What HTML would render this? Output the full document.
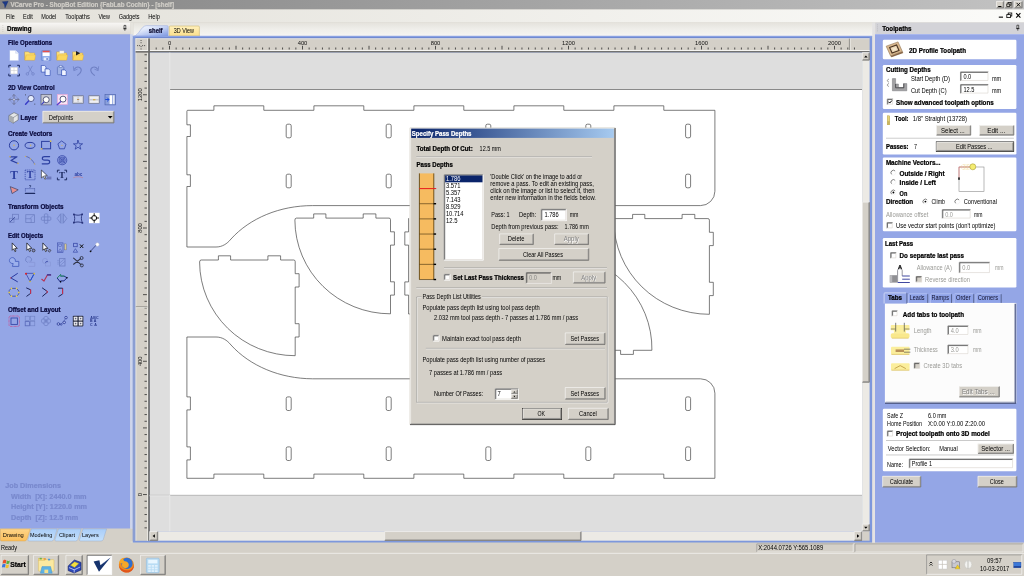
<!DOCTYPE html>
<html lang="en">
<head>
<meta charset="utf-8">
<title>VCarve Pro - ShopBot Edition {FabLab Cochin} - [shelf]</title>
<style>
html,body{margin:0;padding:0;background:#d4d0c8;overflow:hidden}
body{width:1024px;height:576px}
svg{display:block;font-family:"Liberation Sans",sans-serif;will-change:transform;transform:translateZ(0);-webkit-font-smoothing:antialiased}
text{white-space:pre}
</style>
</head>
<body>
<svg width="1024" height="576" viewBox="0 0 1024 576">
<defs>
<linearGradient id="gTitle" x1="0" x2="1" y1="0" y2="0"><stop offset="0" stop-color="#848484"/><stop offset="1" stop-color="#c2c2c2"/></linearGradient>
<linearGradient id="gMenu" x1="0" x2="1" y1="0" y2="0"><stop offset="0" stop-color="#e3e1da"/><stop offset="1" stop-color="#fbfbf9"/></linearGradient>
<linearGradient id="gHdrL" x1="0" x2="0" y1="0" y2="1"><stop offset="0" stop-color="#f8f7f5"/><stop offset="1" stop-color="#dcd9d2"/></linearGradient>
<linearGradient id="gDlg" x1="0" x2="1" y1="0" y2="0"><stop offset="0" stop-color="#0a246a"/><stop offset="1" stop-color="#a6caf0"/></linearGradient>
<linearGradient id="gShelf" x1="0" x2="1" y1="0" y2="1"><stop offset="0" stop-color="#ffffff"/><stop offset="0.35" stop-color="#dfe7fa"/><stop offset="1" stop-color="#7c98e2"/></linearGradient>
<linearGradient id="g3d" x1="0" x2="0" y1="0" y2="1"><stop offset="0" stop-color="#fff0bc"/><stop offset="1" stop-color="#fbdf8a"/></linearGradient>
<linearGradient id="gTabO" x1="0" x2="0" y1="0" y2="1"><stop offset="0" stop-color="#fdd488"/><stop offset="1" stop-color="#fbbf5c"/></linearGradient>
<linearGradient id="gTabB" x1="0" x2="0" y1="0" y2="1"><stop offset="0" stop-color="#a9cdf8"/><stop offset="1" stop-color="#c4e0fc"/></linearGradient>
<linearGradient id="gFold" x1="0" x2="0" y1="0" y2="1"><stop offset="0" stop-color="#fde98a"/><stop offset="1" stop-color="#f2b935"/></linearGradient>
<pattern id="pTrack" width="1.1" height="1.1" patternUnits="userSpaceOnUse"><rect width="1.1" height="1.1" fill="#ebe9e4"/></pattern>
<linearGradient id="gStrip" x1="0" x2="0" y1="0" y2="1"><stop offset="0" stop-color="#e4e2dc"/><stop offset="0.5" stop-color="#efeeea"/><stop offset="1" stop-color="#f5f4f1"/></linearGradient>
</defs>

<rect x="0.00" y="0.00" width="1024.00" height="576.00" fill="#d4d0c8" />
<rect x="0.00" y="0.00" width="1024.00" height="9.50" fill="url(#gTitle)" />
<path d="M2.2 1.8L8.2 1.2L5.0 7.9L4.4 4.4Z" fill="#1c3a86" stroke="#142a66" stroke-width="0.3" />
<text x="10.40" y="7.25" font-size="6.4" fill="#d0cdc7" font-weight="bold" stroke="#d0cdc7" stroke-width="0.22" textLength="163.60" lengthAdjust="spacingAndGlyphs" >VCarve Pro - ShopBot Edition {FabLab Cochin} - [shelf]</text>
<rect x="996.30" y="1.10" width="7.60" height="7.00" fill="#d4d0c8" />
<path d="M996.57 7.82V1.38H1003.62" fill="none" stroke="#ffffff" stroke-width="0.55" />
<path d="M996.57 7.82H1003.62V1.38" fill="none" stroke="#404040" stroke-width="0.55" />
<path d="M997.12 7.27H1003.07V1.93" fill="none" stroke="#808080" stroke-width="0.55" />
<rect x="1004.80" y="1.10" width="7.60" height="7.00" fill="#d4d0c8" />
<path d="M1005.07 7.82V1.38H1012.12" fill="none" stroke="#ffffff" stroke-width="0.55" />
<path d="M1005.07 7.82H1012.12V1.38" fill="none" stroke="#404040" stroke-width="0.55" />
<path d="M1005.62 7.27H1011.57V1.93" fill="none" stroke="#808080" stroke-width="0.55" />
<rect x="1014.20" y="1.10" width="8.20" height="7.00" fill="#d4d0c8" />
<path d="M1014.48 7.82V1.38H1022.13" fill="none" stroke="#ffffff" stroke-width="0.55" />
<path d="M1014.48 7.82H1022.13V1.38" fill="none" stroke="#404040" stroke-width="0.55" />
<path d="M1015.03 7.27H1021.58V1.93" fill="none" stroke="#808080" stroke-width="0.55" />
<rect x="998.20" y="6.00" width="3.20" height="1.00" fill="#000" />
<rect x="1008.00" y="2.60" width="3.00" height="2.60" fill="none" stroke="#000" stroke-width="0.7" />
<rect x="1006.80" y="4.00" width="3.00" height="2.60" fill="#d4d0c8" stroke="#000" stroke-width="0.7" />
<path d="M1016.6 2.9L1020.2 6.5M1020.2 2.9L1016.6 6.5" fill="none" stroke="#000" stroke-width="0.9" />
<rect x="0.00" y="9.50" width="1024.00" height="13.00" fill="url(#gMenu)" />
<text x="6.00" y="19.05" font-size="6.4" fill="#000" textLength="8.75" lengthAdjust="spacingAndGlyphs" >File</text>
<text x="23.10" y="19.05" font-size="6.4" fill="#000" textLength="9.65" lengthAdjust="spacingAndGlyphs" >Edit</text>
<text x="41.25" y="19.05" font-size="6.4" fill="#000" textLength="15.00" lengthAdjust="spacingAndGlyphs" >Model</text>
<text x="65.25" y="19.05" font-size="6.4" fill="#000" textLength="24.50" lengthAdjust="spacingAndGlyphs" >Toolpaths</text>
<text x="98.40" y="19.05" font-size="6.4" fill="#000" textLength="11.60" lengthAdjust="spacingAndGlyphs" >View</text>
<text x="118.75" y="19.05" font-size="6.4" fill="#000" textLength="20.75" lengthAdjust="spacingAndGlyphs" >Gadgets</text>
<text x="148.25" y="19.05" font-size="6.4" fill="#000" textLength="11.75" lengthAdjust="spacingAndGlyphs" >Help</text>
<rect x="998.80" y="16.60" width="4.20" height="1.10" fill="#000" />
<rect x="1008.20" y="13.00" width="3.60" height="3.00" fill="none" stroke="#000" stroke-width="0.8" />
<rect x="1006.80" y="14.60" width="3.60" height="3.00" fill="#f6f6f4" stroke="#000" stroke-width="0.8" />
<path d="M1016.2 13.2L1020.4 17.6M1020.4 13.2L1016.2 17.6" fill="none" stroke="#000" stroke-width="1.1" />
<rect x="0.00" y="22.50" width="130.50" height="11.80" fill="url(#gHdrL)" />
<rect x="2.60" y="25.00" width="0.60" height="0.60" fill="#a8a49c" />
<rect x="2.60" y="27.00" width="0.60" height="0.60" fill="#a8a49c" />
<rect x="2.60" y="29.00" width="0.60" height="0.60" fill="#a8a49c" />
<rect x="2.60" y="31.00" width="0.60" height="0.60" fill="#a8a49c" />
<text x="6.90" y="30.95" font-size="6.4" fill="#000" font-weight="bold" stroke="#000" stroke-width="0.22" textLength="24.60" lengthAdjust="spacingAndGlyphs" >Drawing</text>
<path d="M124.0 25.4H125.8V28.6H124.0ZM123.2 28.8H126.6M124.9 28.8V30.8" fill="#f0f0f0" stroke="#000" stroke-width="0.6" />
<rect x="0.00" y="34.30" width="130.50" height="494.40" fill="#94a6e6" />
<rect x="130.50" y="22.50" width="3.00" height="520.00" fill="#e6e4de" />
<rect x="130.30" y="34.30" width="2.50" height="494.40" fill="#cdd5ee" />
<rect x="133.50" y="22.50" width="742.00" height="13.20" fill="url(#gStrip)" />
<rect x="133.50" y="34.80" width="742.00" height="0.80" fill="#fbfbfa" />
<rect x="872.20" y="22.50" width="3.00" height="520.50" fill="#e4e3e4" />
<rect x="875.40" y="22.50" width="148.60" height="11.70" fill="#d3d3d8" />
<rect x="877.30" y="24.60" width="0.60" height="0.60" fill="#98989c" />
<rect x="877.30" y="26.60" width="0.60" height="0.60" fill="#98989c" />
<rect x="877.30" y="28.60" width="0.60" height="0.60" fill="#98989c" />
<rect x="877.30" y="30.60" width="0.60" height="0.60" fill="#98989c" />
<text x="882.20" y="30.95" font-size="6.4" fill="#000" font-weight="bold" stroke="#000" stroke-width="0.22" textLength="29.30" lengthAdjust="spacingAndGlyphs" >Toolpaths</text>
<path d="M1016.9 25.2H1018.7V28.4H1016.9ZM1016.1 28.6H1019.5M1017.8 28.6V30.6" fill="#e8e8e8" stroke="#000" stroke-width="0.6" />
<rect x="875.00" y="34.10" width="149.00" height="508.60" fill="#94a6e6" />
<line x1="875.00" y1="34.50" x2="1024.00" y2="34.50" stroke="#a9b8ee" stroke-width="0.9" />
<text x="7.90" y="44.75" font-size="6.4" fill="#08083a" font-weight="bold" stroke="#08083a" stroke-width="0.22" textLength="44.35" lengthAdjust="spacingAndGlyphs" >File Operations</text>
<text x="7.90" y="90.00" font-size="6.4" fill="#08083a" font-weight="bold" stroke="#08083a" stroke-width="0.22" textLength="46.70" lengthAdjust="spacingAndGlyphs" >2D View Control</text>
<text x="7.90" y="135.50" font-size="6.4" fill="#08083a" font-weight="bold" stroke="#08083a" stroke-width="0.22" textLength="44.35" lengthAdjust="spacingAndGlyphs" >Create Vectors</text>
<text x="7.90" y="209.00" font-size="6.4" fill="#08083a" font-weight="bold" stroke="#08083a" stroke-width="0.22" textLength="55.60" lengthAdjust="spacingAndGlyphs" >Transform Objects</text>
<text x="7.90" y="237.75" font-size="6.4" fill="#08083a" font-weight="bold" stroke="#08083a" stroke-width="0.22" textLength="35.20" lengthAdjust="spacingAndGlyphs" >Edit Objects</text>
<text x="7.90" y="311.50" font-size="6.4" fill="#08083a" font-weight="bold" stroke="#08083a" stroke-width="0.22" textLength="52.70" lengthAdjust="spacingAndGlyphs" >Offset and Layout</text>
<g transform="translate(14.0 55.5)"><path d="M-4 -5H1.6L4.4 -2.2V5H-4Z" stroke="#c6d2f2" fill="#ffffff" stroke-width="0.5" stroke-linecap="round" stroke-linejoin="round" /><path d="M1.6 -5V-2.2H4.4" stroke="#b8c4e8" fill="#e6ecfb" stroke-width="0.4" stroke-linecap="round" stroke-linejoin="round" /></g>
<g transform="translate(30.0 55.5)"><path d="M-5 -3.6H-1.4L-0.4 -2.4H4.6V4.4H-5Z" stroke="#d8a52e" fill="url(#gFold)" stroke-width="0.5" stroke-linecap="round" stroke-linejoin="round" /><path d="M-5 4.4L-3.6 -0.6H5.6L4.6 4.4Z" stroke="#e0b040" fill="#fbd75f" stroke-width="0.4" stroke-linecap="round" stroke-linejoin="round" /></g>
<g transform="translate(46.0 55.5)"><rect x="-4.6" y="-4.8" width="9.4" height="9.8" rx="0.6" stroke="#5a78c8" fill="#86a6ea" stroke-width="0.5" /><rect x="-3.4" y="-4.8" width="7" height="1.8" rx="0" stroke="none" fill="#e8504a" stroke-width="0.9" /><rect x="-3.4" y="-3" width="7" height="3.6" rx="0" stroke="none" fill="#ffffff" stroke-width="0.9" /><rect x="-2.4" y="2" width="5" height="3" rx="0" stroke="none" fill="#e8eefc" stroke-width="0.9" /><rect x="0.4" y="2.6" width="1.4" height="1.8" rx="0" stroke="none" fill="#5a78c8" stroke-width="0.9" /></g>
<g transform="translate(62.0 55.5)"><path d="M-5 -3.6H-1.4L-0.4 -2.4H4.6V4.4H-5Z" stroke="#d8a52e" fill="url(#gFold)" stroke-width="0.5" stroke-linecap="round" stroke-linejoin="round" /><path d="M-5 4.4L-3.6 -0.6H5.6L4.6 4.4Z" stroke="#e0b040" fill="#fbd75f" stroke-width="0.4" stroke-linecap="round" stroke-linejoin="round" /><rect x="-2.4" y="-4.6" width="4.4" height="2.4" rx="0" stroke="#c8c8c8" fill="#f4f4f4" stroke-width="0.3" /></g>
<g transform="translate(78.0 55.5)"><path d="M-5 -3.6H-1.4L-0.4 -2.4H4.6V4.4H-5Z" stroke="#d8a52e" fill="url(#gFold)" stroke-width="0.5" stroke-linecap="round" stroke-linejoin="round" /><path d="M-5 4.4L-3.6 -0.6H5.6L4.6 4.4Z" stroke="#e0b040" fill="#fbd75f" stroke-width="0.4" stroke-linecap="round" stroke-linejoin="round" /><path d="M-2 -4.4L2.2 -2.2L-2 0Z" stroke="none" fill="#222" stroke-width="0.9" stroke-linecap="round" stroke-linejoin="round" /></g>
<g transform="translate(14.0 70.5)"><rect x="-3.2" y="-3.2" width="6.6" height="6.6" rx="0" stroke="#d0d0d0" fill="#ffffff" stroke-width="0.5" /><path d="M0 -3.2V3.4M-3.2 0H3.4" stroke="#c8c8c8" fill="none" stroke-width="0.5" stroke-linecap="round" stroke-linejoin="round" /><path d="M-5.2 -3.4V-5.2H-3.4M3.6 -5.2H5.4V-3.4M5.4 3.6V5.4H3.6M-3.4 5.4H-5.2V3.6" stroke="#1c2a60" fill="none" stroke-width="1.0" stroke-linecap="round" stroke-linejoin="round" /></g>
<g transform="translate(30.0 70.5)"><path d="M-1.6 -4.4L2.2 2.4M2.2 -4.4L-1.6 2.4" stroke="#6f80c4" fill="none" stroke-width="0.7" stroke-linecap="round" stroke-linejoin="round" /><circle cx="-2.6" cy="3.4" r="1.3" stroke="#6f80c4" fill="none" stroke-width="0.7"/><circle cx="3.0" cy="3.4" r="1.3" stroke="#6f80c4" fill="none" stroke-width="0.7"/></g>
<g transform="translate(46.0 70.5)"><path d="M-4.4 -5H-1.4L0 -3.6V1.6H-4.4Z" stroke="#3a56b8" fill="#eaf0ff" stroke-width="0.7" stroke-linecap="round" stroke-linejoin="round" /><path d="M-0.6 -1.6H2.6L4.2 0V5H-0.6Z" stroke="#3a56b8" fill="#eaf0ff" stroke-width="0.7" stroke-linecap="round" stroke-linejoin="round" /></g>
<g transform="translate(62.0 70.5)"><rect x="-4.6" y="-3.8" width="6.4" height="8" rx="0.8" stroke="#5a70b8" fill="#a0b2e4" stroke-width="0.7" /><rect x="-2.8" y="-5" width="2.8" height="1.8" rx="0" stroke="#5a70b8" fill="#d8e0f8" stroke-width="0.5" /><path d="M0 -0.6H2.8L4.2 0.8V5H0Z" stroke="#3a56b8" fill="#f2f5ff" stroke-width="0.7" stroke-linecap="round" stroke-linejoin="round" /></g>
<g transform="translate(78.0 70.5)"><path d="M-3.6 -1.4C-1 -5 3.6 -3.4 3.2 0.2C2.8 3 0.6 3.6 -0.4 4.8" stroke="#6f80c4" fill="none" stroke-width="1.1" stroke-linecap="round" stroke-linejoin="round" /><path d="M-4.6 -3.8L-4.2 0.2L-0.8 -1.2" stroke="#6f80c4" fill="none" stroke-width="0.8" stroke-linecap="round" stroke-linejoin="round" /></g>
<g transform="translate(94.0 70.5)"><path d="M3.6 -1.4C1 -5 -3.6 -3.4 -3.2 0.2C-2.8 3 -0.6 3.6 0.4 4.8" stroke="#6f80c4" fill="none" stroke-width="1.1" stroke-linecap="round" stroke-linejoin="round" /><path d="M4.6 -3.8L4.2 0.2L0.8 -1.2" stroke="#6f80c4" fill="none" stroke-width="0.8" stroke-linecap="round" stroke-linejoin="round" /></g>
<g transform="translate(14.0 99.5)"><path d="M0 -4.8V4.8M-4.8 0H4.8" stroke="#6a6e90" fill="none" stroke-width="0.8" stroke-linecap="round" stroke-linejoin="round" /><path d="M-1.6 -3.4L0 -5L1.6 -3.4M-1.6 3.4L0 5L1.6 3.4M-3.4 -1.6L-5 0L-3.4 1.6M3.4 -1.6L5 0L3.4 1.6" stroke="#6a6e90" fill="none" stroke-width="0.8" stroke-linecap="round" stroke-linejoin="round" /><circle cx="0" cy="0" r="1.2" stroke="#6a6e90" fill="#c8d0f0" stroke-width="0.5"/></g>
<g transform="translate(30.0 99.5)"><circle cx="1" cy="-1" r="3.1" stroke="#50588c" fill="#e4ecfc" stroke-width="0.9"/><path d="M-1.4 1.6L-4.4 4.8" stroke="#3a3ec8" fill="none" stroke-width="1.5" stroke-linecap="round" stroke-linejoin="round" /><rect x="-4.8" y="-5" width="0.8" height="0.8" rx="0" stroke="none" fill="#222" stroke-width="0.9" /><rect x="4.4" y="4.2" width="0.8" height="0.8" rx="0" stroke="none" fill="#222" stroke-width="0.9" /></g>
<g transform="translate(46.0 99.5)"><rect x="-5" y="-5" width="10.4" height="10.4" rx="0" stroke="#5a5e78" fill="#c4c6d0" stroke-width="0.7" /><circle cx="0.2" cy="0.2" r="3.0" stroke="#4a4e70" fill="#ffffff" stroke-width="0.9"/><path d="M-2.2 2.6L-4.2 4.6" stroke="#3a3ec8" fill="none" stroke-width="1.2" stroke-linecap="round" stroke-linejoin="round" /></g>
<g transform="translate(62.0 99.5)"><rect x="-4.6" y="-5" width="10" height="10" rx="0" stroke="#e8a8d8" fill="#f8e4f4" stroke-width="0.7" /><circle cx="1" cy="-0.4" r="3.0" stroke="#4a4e70" fill="#ffffff" stroke-width="0.9"/><path d="M-1.4 2.2L-4.8 5.2" stroke="#5a3ec8" fill="none" stroke-width="1.4" stroke-linecap="round" stroke-linejoin="round" /></g>
<g transform="translate(78.0 99.5)"><rect x="-5.2" y="-3.8" width="10.6" height="7.8" rx="0" stroke="#6a7088" fill="#c8cad4" stroke-width="0.6" /><rect x="-4" y="-2.6" width="3.4" height="5.2" rx="0" stroke="none" fill="#e8e8ec" stroke-width="0.9" /><rect x="0.8" y="-2.6" width="3.4" height="5.2" rx="0" stroke="none" fill="#e8e8ec" stroke-width="0.9" /><path d="M-0.6 0H0.8" stroke="#b08040" fill="none" stroke-width="0.8" stroke-linecap="round" stroke-linejoin="round" /></g>
<g transform="translate(94.0 99.5)"><rect x="-5.2" y="-3.8" width="10.6" height="7.8" rx="0" stroke="#6a7088" fill="#c8cad4" stroke-width="0.6" /><rect x="-4.2" y="-2.8" width="8.6" height="2.2" rx="0" stroke="none" fill="#f0f0f4" stroke-width="0.9" /><rect x="-4.2" y="1.0" width="8.6" height="2.2" rx="0" stroke="none" fill="#f0f0f4" stroke-width="0.9" /><rect x="-1" y="-0.4" width="2.4" height="1.2" rx="0" stroke="none" fill="#d8b040" stroke-width="0.9" /></g>
<g transform="translate(110.0 99.5)"><rect x="-5" y="-5" width="10.4" height="10.4" rx="0" stroke="#4a60a8" fill="#8aa0dc" stroke-width="0.6" /><rect x="-0.4" y="-4.2" width="2.6" height="8.8" rx="0" stroke="none" fill="#ffffff" stroke-width="0.9" /><rect x="3" y="-4.2" width="1.6" height="8.8" rx="0" stroke="none" fill="#e4e8f4" stroke-width="0.9" /><path d="M-4.4 0H-1.2M-2.6 -1.6L-1 0L-2.6 1.6" stroke="#1848d8" fill="none" stroke-width="1.0" stroke-linecap="round" stroke-linejoin="round" /></g>
<g transform="translate(13.6 117.6)"><path d="M-4.4 -2.2L0.4 -5L4.6 -3V2.4L-0.4 5.4L-4.4 3.2Z" stroke="#606468" fill="#e4e6e8" stroke-width="0.6" stroke-linecap="round" stroke-linejoin="round" /><path d="M-4.4 -2.2L-0.4 0L4.6 -3M-0.4 0V5.4" stroke="#606468" fill="none" stroke-width="0.5" stroke-linecap="round" stroke-linejoin="round" /><path d="M-4.4 -2.2L-0.4 0V5.4L-4.4 3.2Z" stroke="none" fill="#a8acb0" stroke-width="0.9" stroke-linecap="round" stroke-linejoin="round" /></g>
<text x="20.60" y="120.25" font-size="6.4" fill="#08083a" font-weight="bold" stroke="#08083a" stroke-width="0.22" textLength="16.65" lengthAdjust="spacingAndGlyphs" >Layer</text>
<rect x="42.60" y="111.00" width="71.60" height="12.20" fill="#d4d0c8" />
<path d="M42.88 122.92V111.28H113.92" fill="none" stroke="#ffffff" stroke-width="0.55" />
<path d="M42.88 122.92H113.92V111.28" fill="none" stroke="#404040" stroke-width="0.55" />
<path d="M43.43 122.38H113.37V111.83" fill="none" stroke="#808080" stroke-width="0.55" />
<text x="48.75" y="120.25" font-size="6.4" fill="#000" textLength="24.35" lengthAdjust="spacingAndGlyphs" >Defpoints</text>
<path d="M107.8 115.9H112.6L110.2 118.5Z" fill="#000" stroke="none" stroke-width="0.55" />
<g transform="translate(14.0 145.0)"><circle cx="0" cy="0.3" r="4.6" stroke="#2c3fa0" fill="none" stroke-width="1.0"/><circle cx="0" cy="0.3" r="0.9" stroke="none" fill="#c8b070" stroke-width="0.9"/></g>
<g transform="translate(30.0 145.0)"><ellipse cx="0" cy="0.4" rx="4.9" ry="3.0" fill="none" stroke="#2c3fa0" stroke-width="1.0"/><circle cx="0.6" cy="0.4" r="0.8" stroke="none" fill="#c8b070" stroke-width="0.9"/></g>
<g transform="translate(46.0 145.0)"><rect x="-4.4" y="-3.6" width="9" height="7.4" rx="0" stroke="#2c3fa0" fill="none" stroke-width="1.0" /><circle cx="4.6" cy="-3.8" r="0.9" stroke="none" fill="#d8c060" stroke-width="0.9"/><circle cx="-4.4" cy="3.8" r="0.9" stroke="none" fill="#d8c060" stroke-width="0.9"/></g>
<g transform="translate(62.0 145.0)"><path d="M0 -3.8L4 -0.8L2.4 3.8H-2.4L-4 -0.8Z" stroke="#2c3fa0" fill="none" stroke-width="0.8" stroke-linecap="round" stroke-linejoin="round" /><circle cx="0" cy="0.4" r="0.7" stroke="none" fill="#c8b070" stroke-width="0.9"/></g>
<g transform="translate(78.0 145.0)"><path d="M0 -4.6L1.2 -1.2H4.6L1.8 0.8L2.8 4.2L0 2.2L-2.8 4.2L-1.8 0.8L-4.6 -1.2H-1.2Z" stroke="#2c3fa0" fill="none" stroke-width="0.8" stroke-linecap="round" stroke-linejoin="round" /></g>
<g transform="translate(14.0 160.0)"><path d="M-3.8 -3.2H3L-3 0.4L3.6 3.2" stroke="#2c3fa0" fill="none" stroke-width="1.2" stroke-linecap="round" stroke-linejoin="round" /><circle cx="-4" cy="-3.4" r="0.8" stroke="none" fill="#c8b070" stroke-width="0.9"/><circle cx="4" cy="3.4" r="0.8" stroke="none" fill="#c8b070" stroke-width="0.9"/></g>
<g transform="translate(30.0 160.0)"><path d="M-4.4 -3.6C-1 -3.4 2.6 0 4.6 4" stroke="#44509c" fill="none" stroke-width="0.7" stroke-linecap="round" stroke-linejoin="round" /><circle cx="-4.4" cy="-3.6" r="0.7" stroke="none" fill="#c8b070" stroke-width="0.9"/><circle cx="4.6" cy="4" r="0.7" stroke="none" fill="#c8b070" stroke-width="0.9"/><circle cx="0.6" cy="-1" r="0.7" stroke="none" fill="#c8b070" stroke-width="0.9"/></g>
<g transform="translate(46.0 160.0)"><path d="M3.6 -3.4H-1.4C-4.4 -3.4 -4.4 0.2 -1.4 0.2H1.4C4.4 0.2 4.4 3.8 1.4 3.8H-3.8" stroke="#2c3fa0" fill="none" stroke-width="1.2" stroke-linecap="round" stroke-linejoin="round" /></g>
<g transform="translate(62.0 160.0)"><circle cx="0.2" cy="0.2" r="4.6" stroke="#2c3fa0" fill="#8a9ae0" stroke-width="0.7"/><circle cx="0.2" cy="0.2" r="3" stroke="#2c3fa0" fill="none" stroke-width="0.6"/><circle cx="0.2" cy="0.2" r="1.5" stroke="#2c3fa0" fill="none" stroke-width="0.6"/><path d="M-3 -3L3.4 3.4M3.2 -3L-3 3.2" stroke="#2c3fa0" fill="none" stroke-width="0.5" stroke-linecap="round" stroke-linejoin="round" /></g>
<text x="14" y="178.6" font-family="Liberation Serif,serif" font-size="11.5" font-weight="bold" text-anchor="middle" fill="#2c3fa0">T</text>
<text x="30" y="178.2" font-family="Liberation Serif,serif" font-size="10" font-weight="bold" text-anchor="middle" fill="#2c3fa0">T</text>
<g transform="translate(30.0 175.0)"><rect x="-4.8" y="-5" width="9.8" height="9.8" rx="0" stroke="#2c3fa0" fill="none" stroke-width="0.7" stroke-dasharray="1.2 0.8"/></g>
<g transform="translate(46.0 175.0)"><path d="M-4.6 -4.6V3L-2.6 1.2L-1.2 4.2L0 3.6L-1.4 0.8H1Z" stroke="#222" fill="#ffffff" stroke-width="0.6" stroke-linecap="round" stroke-linejoin="round" /><path d="M0.6 3.8H5M1.4 2.2H5" stroke="#5a64a8" fill="none" stroke-width="1.0" stroke-linecap="round" stroke-linejoin="round" /></g>
<text x="62" y="178.0" font-family="Liberation Serif,serif" font-size="9" font-weight="bold" text-anchor="middle" fill="#1c2a60">T</text>
<g transform="translate(62.0 175.0)"><path d="M-4.6 -3V-4.8H-2.8M2.8 -4.8H4.6V-3M4.6 3V4.8H2.8M-2.8 4.8H-4.6V3" stroke="#1c2a60" fill="none" stroke-width="1.0" stroke-linecap="round" stroke-linejoin="round" /></g>
<text x="78.4" y="176.4" font-size="4.6" font-weight="bold" text-anchor="middle" fill="#2c3fa0">abc</text>
<g transform="translate(78.0 175.0)"><path d="M-4.4 2.6C-1.4 1.4 1.6 1.4 4.6 2.6" stroke="#c08090" fill="none" stroke-width="0.7" stroke-linecap="round" stroke-linejoin="round" /></g>
<g transform="translate(14.0 190.0)"><path d="M-3.4 -3.2L4.2 -0.2L-1.6 3.4Z" stroke="#4a4a70" fill="#e69090" stroke-width="0.8" stroke-linecap="round" stroke-linejoin="round" /></g>
<g transform="translate(30.0 190.0)"><path d="M-4.6 3.4H4.6" stroke="#1c2a60" fill="none" stroke-width="1.3" stroke-linecap="round" stroke-linejoin="round" /><path d="M-4.6 -1.6V1.4M4.6 -1.6V1.4M-4.6 -1.4H4.6" stroke="#4858a8" fill="none" stroke-width="0.5" stroke-linecap="round" stroke-linejoin="round" stroke-dasharray="0.8 0.6"/><text x="0" y="-1.6" font-size="4.4" font-weight="bold" text-anchor="middle" fill="#1c2a60">?</text></g>
<g transform="translate(14.0 218.5)"><rect x="-1.6" y="-4.2" width="6" height="4.8" rx="0" stroke="#6f80c4" fill="none" stroke-width="0.8" /><rect x="-4.6" y="-0.2" width="4.6" height="4" rx="0" stroke="#6f80c4" fill="none" stroke-width="0.8" /><path d="M-3.6 3.2L0.6 -1" stroke="#3a4a98" fill="none" stroke-width="0.9" stroke-linecap="round" stroke-linejoin="round" /></g>
<g transform="translate(30.0 218.5)"><rect x="-4.2" y="-3.8" width="8.6" height="7.8" rx="0" stroke="#6f80c4" fill="none" stroke-width="0.8" /><path d="M-4.2 0.2H1.2V4M0 0L3.6 -3.4" stroke="#6f80c4" fill="none" stroke-width="0.7" stroke-linecap="round" stroke-linejoin="round" /></g>
<g transform="translate(46.0 218.5)"><rect x="-1.6" y="-4.6" width="3.4" height="9.4" rx="0.8" stroke="#6f80c4" fill="none" stroke-width="0.8" /><rect x="-4.6" y="-1.6" width="9.4" height="3.4" rx="0.8" stroke="#6f80c4" fill="none" stroke-width="0.8" /></g>
<g transform="translate(62.0 218.5)"><path d="M-1.6 -4.4L-4.8 0L-1.6 4.4ZM1.6 -4.4L4.8 0L1.6 4.4Z" stroke="#6f80c4" fill="none" stroke-width="0.8" stroke-linecap="round" stroke-linejoin="round" /><path d="M0 -4.8V4.8" stroke="#6f80c4" fill="none" stroke-width="0.5" stroke-linecap="round" stroke-linejoin="round" /></g>
<g transform="translate(78.0 218.5)"><path d="M-4 -4C-1 -3 1.4 -3 4 -4.2C3 -1 3.2 1.6 4.4 4.4C1.4 3.2 -1.4 3.2 -4.2 4.2C-3 1.4 -3 -1.4 -4 -4Z" stroke="#28347c" fill="none" stroke-width="0.9" stroke-linecap="round" stroke-linejoin="round" /><rect x="-4.9" y="-4.9" width="1.6" height="1.6" rx="0" stroke="none" fill="#28347c" stroke-width="0.9" /><rect x="3.4" y="-5" width="1.6" height="1.6" rx="0" stroke="none" fill="#28347c" stroke-width="0.9" /><rect x="3.6" y="3.6" width="1.6" height="1.6" rx="0" stroke="none" fill="#28347c" stroke-width="0.9" /><rect x="-5" y="3.4" width="1.6" height="1.6" rx="0" stroke="none" fill="#28347c" stroke-width="0.9" /></g>
<g transform="translate(94.2 218.0)"><rect x="-5.2" y="-5.2" width="10.6" height="10.4" rx="0" stroke="none" fill="#ffffff" stroke-width="0.9" /><circle cx="0" cy="0" r="2.5" stroke="#000" fill="none" stroke-width="0.9"/><path d="M0 -4.4V-2M0 2V4.4M-4.4 0H-2M2 0H4.4" stroke="#000" fill="none" stroke-width="0.9" stroke-linecap="round" stroke-linejoin="round" /></g>
<g transform="translate(14.0 247.5)"><path d="M-1.8 -4.2V2.8L-0.3 1.3L0.9 4.1L2.0 3.6L0.8 0.9H2.9Z" stroke="#111" fill="#ffffff" stroke-width="0.7" stroke-linecap="round" stroke-linejoin="round" /></g>
<g transform="translate(28.6 247.5)"><path d="M-1.8 -4.2V2.8L-0.3 1.3L0.9 4.1L2.0 3.6L0.8 0.9H2.9Z" stroke="#111" fill="#ffffff" stroke-width="0.7" stroke-linecap="round" stroke-linejoin="round" /><circle cx="5" cy="3" r="1.4" stroke="#222" fill="#8890c0" stroke-width="0.7"/></g>
<g transform="translate(44.6 247.5)"><path d="M-1.8 -4.2V2.8L-0.3 1.3L0.9 4.1L2.0 3.6L0.8 0.9H2.9Z" stroke="#111" fill="#ffffff" stroke-width="0.7" stroke-linecap="round" stroke-linejoin="round" /><path d="M3.6 3L5 1.6L6.4 3L5 4.4Z" stroke="#222" fill="#8890c0" stroke-width="0.6" stroke-linecap="round" stroke-linejoin="round" /></g>
<g transform="translate(62.0 247.5)"><rect x="-4.6" y="-4.6" width="5.6" height="9.6" rx="0" stroke="#3a4aa8" fill="none" stroke-width="0.6" /><rect x="-3.2" y="-3.4" width="2.8" height="2.6" rx="0" stroke="#3a4aa8" fill="none" stroke-width="0.45" /><path d="M-3.4 3.6L-1.8 1.2L-0.2 3.6Z" stroke="#3a4aa8" fill="none" stroke-width="0.45" stroke-linecap="round" stroke-linejoin="round" /><rect x="2.6" y="-3.6" width="1.8" height="6" rx="0" stroke="#6a6e80" fill="#d8c890" stroke-width="0.4" /></g>
<g transform="translate(78.0 247.5)"><rect x="-4.4" y="-4.2" width="3.6" height="3.4" rx="0" stroke="#3a4aa8" fill="none" stroke-width="0.8" /><path d="M-4.6 4.4L-2.6 1.2L-0.6 4.4Z" stroke="#3a4aa8" fill="none" stroke-width="0.7" stroke-linecap="round" stroke-linejoin="round" /><path d="M2.2 -2.8L5 0.2M5 -2.8L2.2 0.2" stroke="#111" fill="none" stroke-width="1.0" stroke-linecap="round" stroke-linejoin="round" /></g>
<g transform="translate(94.0 247.5)"><path d="M-3.4 3.6L2 -2.2" stroke="#3a4488" fill="none" stroke-width="0.9" stroke-linecap="round" stroke-linejoin="round" /><circle cx="-3.4" cy="3.8" r="0.9" stroke="none" fill="#111" stroke-width="0.9"/><circle cx="3.4" cy="-3" r="1.7" stroke="#c8c8d0" fill="#ffffff" stroke-width="0.5"/></g>
<g transform="translate(14.0 262.0)"><path d="M-1.2 1.57A3 3 0 1 1 1.29 -0.6H4.8V4.4H-1.2Z" stroke="#4862c0" fill="#9cb0ec" stroke-width="0.9" stroke-linecap="round" stroke-linejoin="round" /></g>
<g transform="translate(30.0 262.0)"><path d="M-2.6 0.4A3 3 0 1 1 1 -0.6" stroke="#6f80c4" fill="none" stroke-width="0.8" stroke-linecap="round" stroke-linejoin="round" /><path d="M-1 -1.2V0.4H4.8V4.4H-1" stroke="#8696d6" fill="none" stroke-width="0.7" stroke-linecap="round" stroke-linejoin="round" /></g>
<g transform="translate(46.0 262.0)"><circle cx="-1" cy="-1" r="2.6" stroke="#8696d6" fill="none" stroke-width="0.7"/><rect x="-0.4" y="0" width="5" height="4" rx="0" stroke="#8696d6" fill="none" stroke-width="0.6" /><path d="M-0.4 0.4A1.4 1.4 0 0 1 1.4 -0.6" stroke="#3a4aa8" fill="none" stroke-width="0.9" stroke-linecap="round" stroke-linejoin="round" /></g>
<g transform="translate(62.0 262.0)"><rect x="-2.4" y="-3.6" width="5.4" height="7.6" rx="0" stroke="#6f80c4" fill="none" stroke-width="0.8" /><path d="M-2.2 1L2.8 -3.4M-2.2 3.8L2.8 -0.6" stroke="#6f80c4" fill="none" stroke-width="0.6" stroke-linecap="round" stroke-linejoin="round" /><path d="M-4.4 -1.6H-3M-4.4 0.2H-3M-4.4 2H-3" stroke="#6f80c4" fill="none" stroke-width="0.5" stroke-linecap="round" stroke-linejoin="round" /></g>
<g transform="translate(78.0 262.0)"><path d="M-4.4 -3.8L3 2.6M-4.4 2.2L2.6 -3.4" stroke="#303448" fill="none" stroke-width="1.1" stroke-linecap="round" stroke-linejoin="round" /><circle cx="3.6" cy="-4" r="1.5" stroke="#303448" fill="none" stroke-width="0.9"/><circle cx="3.8" cy="3.4" r="1.5" stroke="#303448" fill="none" stroke-width="0.9"/></g>
<g transform="translate(14.0 277.5)"><path d="M3.4 -4L-3.2 0.4L3.4 4.2" stroke="#2838a0" fill="none" stroke-width="1.0" stroke-linecap="round" stroke-linejoin="round" /><circle cx="-3.2" cy="0.4" r="0.6" stroke="none" fill="#e04040" stroke-width="0.9"/></g>
<g transform="translate(30.0 277.5)"><path d="M-4 -3.8L0 3.8L4.2 -3.8Z" stroke="#3848b0" fill="none" stroke-width="0.8" stroke-linecap="round" stroke-linejoin="round" /><path d="M0 3.8L4.2 -3.8" stroke="#2050d0" fill="none" stroke-width="1.0" stroke-linecap="round" stroke-linejoin="round" /><circle cx="-4" cy="-3.8" r="1.0" stroke="none" fill="#e02020" stroke-width="0.9"/><circle cx="0" cy="3.8" r="0.9" stroke="none" fill="#d8c040" stroke-width="0.9"/><circle cx="4.2" cy="-3.8" r="0.9" stroke="none" fill="#d8c040" stroke-width="0.9"/></g>
<g transform="translate(46.0 277.5)"><path d="M-4.2 1.8L-2 3.6L1.4 -2.6H4.6" stroke="#b83050" fill="none" stroke-width="1.1" stroke-linecap="round" stroke-linejoin="round" /><path d="M1.4 -2.6H4.6" stroke="#2838a0" fill="none" stroke-width="1.1" stroke-linecap="round" stroke-linejoin="round" /></g>
<g transform="translate(62.0 277.5)"><path d="M-4.6 0.2L-1.4 -3V-1.4H2L5 0.2L2 3.4H-1.4V4.4Z" stroke="#1c2a80" fill="none" stroke-width="1.0" stroke-linecap="round" stroke-linejoin="round" /><path d="M-4.6 0.2L-1.4 -3V-1.4H2" stroke="#309870" fill="none" stroke-width="1.0" stroke-linecap="round" stroke-linejoin="round" /><circle cx="5" cy="0.2" r="0.7" stroke="none" fill="#000" stroke-width="0.9"/><circle cx="-1.4" cy="4.2" r="0.7" stroke="none" fill="#000" stroke-width="0.9"/></g>
<g transform="translate(14.0 292.0)"><path d="M-2.6 -3.6H2.6L4.8 -1V2L2.6 4.2H-2.6L-4.8 2V-1Z" stroke="#4858a8" fill="none" stroke-width="1.0" stroke-linecap="round" stroke-linejoin="round" /><circle cx="-2.6" cy="-3.6" r="0.85" stroke="none" fill="#e8d050" stroke-width="0.9"/><circle cx="2.6" cy="-3.6" r="0.85" stroke="none" fill="#e8d050" stroke-width="0.9"/><circle cx="4.8" cy="0.4" r="0.85" stroke="none" fill="#e8d050" stroke-width="0.9"/><circle cx="2.6" cy="4.2" r="0.85" stroke="none" fill="#e8d050" stroke-width="0.9"/><circle cx="-2.6" cy="4.2" r="0.85" stroke="none" fill="#e8d050" stroke-width="0.9"/><circle cx="-4.8" cy="0.4" r="0.85" stroke="none" fill="#e8d050" stroke-width="0.9"/></g>
<g transform="translate(30.0 292.0)"><path d="M-3.4 -4L0.6 -2.2V1.4L-3.2 4.2" stroke="#1c2458" fill="none" stroke-width="1.0" stroke-linecap="round" stroke-linejoin="round" /><path d="M0.6 -2.2V1.4" stroke="#d03050" fill="none" stroke-width="1.0" stroke-linecap="round" stroke-linejoin="round" /></g>
<g transform="translate(46.0 292.0)"><path d="M-3.6 -4L1.8 -0.2L-3.4 4.2" stroke="#1c2458" fill="none" stroke-width="1.0" stroke-linecap="round" stroke-linejoin="round" /><path d="M0.6 -1.2L1.8 -0.2L0.6 0.8" stroke="#d03050" fill="none" stroke-width="1.0" stroke-linecap="round" stroke-linejoin="round" /></g>
<g transform="translate(62.0 292.0)"><path d="M-3.6 -3.8H0.6V2L-3.2 4.4" stroke="#1c2458" fill="none" stroke-width="1.0" stroke-linecap="round" stroke-linejoin="round" /><path d="M0.6 -3V1.6" stroke="#d03050" fill="none" stroke-width="1.0" stroke-linecap="round" stroke-linejoin="round" /></g>
<g transform="translate(14.0 321.0)"><rect x="-5" y="-5" width="10.4" height="10.4" rx="1.6" stroke="#d83878" fill="none" stroke-width="0.8" stroke-dasharray="0.7 0.6"/><rect x="-3" y="-3" width="6.4" height="6.4" rx="0" stroke="#3848a8" fill="none" stroke-width="0.9" /></g>
<g transform="translate(30.0 321.0)"><rect x="-4.8" y="-4.8" width="4.2" height="4.2" rx="0" stroke="#6f80c4" fill="none" stroke-width="0.6" /><rect x="0.6" y="-4.8" width="4.2" height="4.2" rx="0" stroke="#6f80c4" fill="none" stroke-width="0.6" /><rect x="-4.8" y="0.6" width="4.2" height="4.2" rx="0" stroke="#5868b8" fill="none" stroke-width="0.8" /><rect x="0.6" y="0.6" width="4.2" height="4.2" rx="0" stroke="#6f80c4" fill="none" stroke-width="0.6" /></g>
<g transform="translate(46.0 321.0)"><circle cx="0" cy="-2.4" r="2.3" stroke="#6f80c4" fill="none" stroke-width="0.7"/><circle cx="0" cy="2.4" r="2.3" stroke="#6f80c4" fill="none" stroke-width="0.7"/><circle cx="-2.4" cy="0" r="2.3" stroke="#6f80c4" fill="none" stroke-width="0.7"/><circle cx="2.4" cy="0" r="2.3" stroke="#6f80c4" fill="none" stroke-width="0.7"/></g>
<g transform="translate(62.0 321.0)"><path d="M-4 3C-2 4.6 1 3 3.8 -3.4" stroke="#4858a8" fill="none" stroke-width="0.6" stroke-linecap="round" stroke-linejoin="round" /><circle cx="-3.6" cy="3" r="1.3" stroke="#2c3c98" fill="#a8b4e8" stroke-width="0.8"/><circle cx="2.2" cy="1.4" r="1.3" stroke="#2c3c98" fill="#a8b4e8" stroke-width="0.8"/><circle cx="4" cy="-3.4" r="1.3" stroke="#2c3c98" fill="#a8b4e8" stroke-width="0.8"/><circle cx="-0.8" cy="3.4" r="0.9" stroke="#2c3c98" fill="none" stroke-width="0.6"/></g>
<g transform="translate(78.0 321.0)"><rect x="-5.2" y="-5.2" width="10.6" height="10.6" rx="0.8" stroke="none" fill="#34384c" stroke-width="0.9" /><rect x="-4.2" y="-4.2" width="3.6" height="3.6" rx="0.5" stroke="none" fill="#e8e8ec" stroke-width="0.9" /><circle cx="-2.4000000000000004" cy="-2.4000000000000004" r="0.8" stroke="none" fill="#606478" stroke-width="0.9"/><rect x="-4.2" y="0.8" width="3.6" height="3.6" rx="0.5" stroke="none" fill="#e8e8ec" stroke-width="0.9" /><circle cx="-2.4000000000000004" cy="2.6" r="0.8" stroke="none" fill="#606478" stroke-width="0.9"/><rect x="0.8" y="-4.2" width="3.6" height="3.6" rx="0.5" stroke="none" fill="#e8e8ec" stroke-width="0.9" /><circle cx="2.6" cy="-2.4000000000000004" r="0.8" stroke="none" fill="#606478" stroke-width="0.9"/><rect x="0.8" y="0.8" width="3.6" height="3.6" rx="0.5" stroke="none" fill="#e8e8ec" stroke-width="0.9" /><circle cx="2.6" cy="2.6" r="0.8" stroke="none" fill="#606478" stroke-width="0.9"/></g>
<g transform="translate(94.0 321.0)"><text x="-2.4" y="-2.2" font-size="3.6" font-weight="bold" fill="#28388c" text-anchor="middle">A</text><text x="0.6" y="-2.2" font-size="3.6" font-weight="bold" fill="#28388c" text-anchor="middle">B</text><text x="3.4" y="-2.2" font-size="3.6" font-weight="bold" fill="#28388c" text-anchor="middle">C</text><text x="-2.6" y="1.2" font-size="3.6" font-weight="bold" fill="#28388c" text-anchor="middle">B</text><text x="1" y="1.4" font-size="3.6" font-weight="bold" fill="#28388c" text-anchor="middle">A</text><text x="-2.6" y="4.6" font-size="3.6" font-weight="bold" fill="#28388c" text-anchor="middle">C</text><text x="1.6" y="4.6" font-size="3.6" font-weight="bold" fill="#28388c" text-anchor="middle">A</text></g>
<text x="5.30" y="488.25" font-size="7.4" fill="#7989cd" font-weight="bold" stroke="#7989cd" stroke-width="0.22" textLength="55.70" lengthAdjust="spacingAndGlyphs" >Job Dimensions</text>
<text x="11.00" y="498.75" font-size="7.4" fill="#7989cd" font-weight="bold" stroke="#7989cd" stroke-width="0.22" textLength="75.60" lengthAdjust="spacingAndGlyphs" >Width  [X]: 2440.0 mm</text>
<text x="11.00" y="509.45" font-size="7.4" fill="#7989cd" font-weight="bold" stroke="#7989cd" stroke-width="0.22" textLength="76.10" lengthAdjust="spacingAndGlyphs" >Height [Y]: 1220.0 mm</text>
<text x="11.00" y="520.15" font-size="7.4" fill="#7989cd" font-weight="bold" stroke="#7989cd" stroke-width="0.22" textLength="67.10" lengthAdjust="spacingAndGlyphs" >Depth  [Z]: 12.5 mm</text>
<rect x="0.00" y="528.70" width="133.50" height="13.00" fill="#d4d0c8" />
<path d="M83.0 528.9H106.6L103.2 539.6Q102.6 541 101.0 541H80.6Q79.2 541 79.6 539.6Z" fill="url(#gTabB)" stroke="#8ea4c8" stroke-width="0.4" />
<text x="81.90" y="537.25" font-size="6.0" fill="#000" textLength="16.85" lengthAdjust="spacingAndGlyphs" >Layers</text>
<path d="M58.4 528.9H81.2L77.8 539.6Q77.2 541 75.6 541H56.0Q54.6 541 55.0 539.6Z" fill="url(#gTabB)" stroke="#8ea4c8" stroke-width="0.4" />
<text x="59.00" y="537.25" font-size="6.0" fill="#000" textLength="16.00" lengthAdjust="spacingAndGlyphs" >Clipart</text>
<path d="M31.4 528.9H57.2L53.8 539.6Q53.2 541 51.6 541H29.0Q27.6 541 28.0 539.6Z" fill="url(#gTabB)" stroke="#8ea4c8" stroke-width="0.4" />
<text x="30.00" y="537.25" font-size="6.0" fill="#000" textLength="22.25" lengthAdjust="spacingAndGlyphs" >Modeling</text>
<path d="M0.4 528.9H30.2L26.8 539.6Q26.2 541 24.6 541H1.6Q0.4 541 0.4 539.8Z" fill="url(#gTabO)" stroke="#d8a040" stroke-width="0.4" />
<text x="2.75" y="537.25" font-size="6.0" fill="#000" textLength="21.00" lengthAdjust="spacingAndGlyphs" >Drawing</text>
<path d="M133.6 36.2C139 35.6 141 26 146.2 25.7H167.2Q168.2 25.7 168.2 26.7V36.2Z" fill="url(#gShelf)" stroke="#8ea2dc" stroke-width="0.5" />
<text x="148.80" y="33.05" font-size="6.4" fill="#0a0a30" font-weight="bold" stroke="#0a0a30" stroke-width="0.22" textLength="13.70" lengthAdjust="spacingAndGlyphs" >shelf</text>
<path d="M169.3 36.2V27Q169.3 26 170.3 26H198.4Q199.4 26 199.4 27V36.2Z" fill="url(#g3d)" stroke="#cdb76e" stroke-width="0.6" />
<text x="173.80" y="33.05" font-size="6.4" fill="#000" textLength="20.20" lengthAdjust="spacingAndGlyphs" >3D View</text>
<rect x="132.80" y="35.90" width="739.30" height="506.80" fill="#7d97dc" />
<rect x="132.80" y="35.90" width="739.30" height="0.70" fill="#93a9e8" />
<rect x="135.60" y="37.60" width="734.00" height="0.80" fill="#6079bd" />
<rect x="132.80" y="38.40" width="2.80" height="502.40" fill="#8b9ed2" />
<rect x="135.60" y="38.40" width="734.00" height="13.20" fill="#d4d0c8" />
<rect x="135.60" y="38.40" width="13.20" height="502.40" fill="#d4d0c8" />
<line x1="135.60" y1="38.70" x2="869.60" y2="38.70" stroke="#f4f3f0" stroke-width="0.6" />
<line x1="135.90" y1="38.40" x2="135.90" y2="540.80" stroke="#f4f3f0" stroke-width="0.6" />
<rect x="135.60" y="50.00" width="734.00" height="1.20" fill="#f6f5f2" />
<rect x="147.40" y="38.40" width="0.90" height="502.40" fill="#f6f5f2" />
<rect x="135.60" y="51.10" width="734.00" height="1.50" fill="#6a6967" />
<rect x="148.20" y="38.40" width="1.70" height="502.40" fill="#6a6967" />
<rect x="140.60" y="40.00" width="0.90" height="0.90" fill="#303030" />
<rect x="140.60" y="42.30" width="0.90" height="0.90" fill="#303030" />
<rect x="140.60" y="46.20" width="0.90" height="0.90" fill="#303030" />
<rect x="140.60" y="48.50" width="0.90" height="0.90" fill="#303030" />
<rect x="137.20" y="45.20" width="0.90" height="0.90" fill="#303030" />
<rect x="139.20" y="45.20" width="0.90" height="0.90" fill="#303030" />
<rect x="142.20" y="45.20" width="0.90" height="0.90" fill="#303030" />
<rect x="144.20" y="45.20" width="0.90" height="0.90" fill="#303030" />
<rect x="149.90" y="52.60" width="712.20" height="478.70" fill="#dedede" />
<rect x="169.90" y="89.60" width="692.20" height="405.40" fill="#ffffff" />
<line x1="170.00" y1="89.50" x2="862.10" y2="89.50" stroke="#707070" stroke-width="0.8" />
<line x1="149.60" y1="495.30" x2="862.10" y2="495.30" stroke="#b4b4b4" stroke-width="0.9" />
<line x1="169.80" y1="52.50" x2="169.80" y2="89.50" stroke="#ebebeb" stroke-width="0.8" />
<line x1="169.80" y1="494.90" x2="169.80" y2="531.30" stroke="#ebebeb" stroke-width="0.8" />
<line x1="149.60" y1="495.80" x2="170.00" y2="495.80" stroke="#ececec" stroke-width="0.8" />
<path d="M156.20 47.5V49.5M162.85 47.5V49.5M169.50 45.8V49.5M176.15 47.5V49.5M182.80 47.5V49.5M189.45 47.5V49.5M196.10 47.5V49.5M202.75 47.5V49.5M209.40 47.5V49.5M216.05 47.5V49.5M222.70 47.5V49.5M229.35 47.5V49.5M236.00 45.8V49.5M242.65 47.5V49.5M249.30 47.5V49.5M255.95 47.5V49.5M262.60 47.5V49.5M269.25 47.5V49.5M275.90 47.5V49.5M282.55 47.5V49.5M289.20 47.5V49.5M295.85 47.5V49.5M302.50 45.8V49.5M309.15 47.5V49.5M315.80 47.5V49.5M322.45 47.5V49.5M329.10 47.5V49.5M335.75 47.5V49.5M342.40 47.5V49.5M349.05 47.5V49.5M355.70 47.5V49.5M362.35 47.5V49.5M369.00 45.8V49.5M375.65 47.5V49.5M382.30 47.5V49.5M388.95 47.5V49.5M395.60 47.5V49.5M402.25 47.5V49.5M408.90 47.5V49.5M415.55 47.5V49.5M422.20 47.5V49.5M428.85 47.5V49.5M435.50 45.8V49.5M442.15 47.5V49.5M448.80 47.5V49.5M455.45 47.5V49.5M462.10 47.5V49.5M468.75 47.5V49.5M475.40 47.5V49.5M482.05 47.5V49.5M488.70 47.5V49.5M495.35 47.5V49.5M502.00 45.8V49.5M508.65 47.5V49.5M515.30 47.5V49.5M521.95 47.5V49.5M528.60 47.5V49.5M535.25 47.5V49.5M541.90 47.5V49.5M548.55 47.5V49.5M555.20 47.5V49.5M561.85 47.5V49.5M568.50 45.8V49.5M575.15 47.5V49.5M581.80 47.5V49.5M588.45 47.5V49.5M595.10 47.5V49.5M601.75 47.5V49.5M608.40 47.5V49.5M615.05 47.5V49.5M621.70 47.5V49.5M628.35 47.5V49.5M635.00 45.8V49.5M641.65 47.5V49.5M648.30 47.5V49.5M654.95 47.5V49.5M661.60 47.5V49.5M668.25 47.5V49.5M674.90 47.5V49.5M681.55 47.5V49.5M688.20 47.5V49.5M694.85 47.5V49.5M701.50 45.8V49.5M708.15 47.5V49.5M714.80 47.5V49.5M721.45 47.5V49.5M728.10 47.5V49.5M734.75 47.5V49.5M741.40 47.5V49.5M748.05 47.5V49.5M754.70 47.5V49.5M761.35 47.5V49.5M768.00 45.8V49.5M774.65 47.5V49.5M781.30 47.5V49.5M787.95 47.5V49.5M794.60 47.5V49.5M801.25 47.5V49.5M807.90 47.5V49.5M814.55 47.5V49.5M821.20 47.5V49.5M827.85 47.5V49.5M834.50 45.8V49.5M841.15 47.5V49.5M847.80 47.5V49.5M854.45 47.5V49.5" fill="none" stroke="#222" stroke-width="0.75" />
<text x="169.50" y="45.05" font-size="5.8" fill="#111" text-anchor="middle" >0</text>
<text x="302.50" y="45.05" font-size="5.8" fill="#111" text-anchor="middle" >400</text>
<text x="435.50" y="45.05" font-size="5.8" fill="#111" text-anchor="middle" >800</text>
<text x="568.50" y="45.05" font-size="5.8" fill="#111" text-anchor="middle" >1200</text>
<text x="701.50" y="45.05" font-size="5.8" fill="#111" text-anchor="middle" >1600</text>
<text x="834.50" y="45.05" font-size="5.8" fill="#111" text-anchor="middle" >2000</text>
<path d="M144.5 527.87H146.9M144.5 521.20H146.9M144.5 514.54H146.9M144.5 507.88H146.9M144.5 501.21H146.9M143.0 494.55H146.9M144.5 487.89H146.9M144.5 481.22H146.9M144.5 474.56H146.9M144.5 467.90H146.9M144.5 461.23H146.9M144.5 454.57H146.9M144.5 447.91H146.9M144.5 441.24H146.9M144.5 434.58H146.9M143.0 427.92H146.9M144.5 421.25H146.9M144.5 414.59H146.9M144.5 407.93H146.9M144.5 401.26H146.9M144.5 394.60H146.9M144.5 387.94H146.9M144.5 381.27H146.9M144.5 374.61H146.9M144.5 367.95H146.9M143.0 361.28H146.9M144.5 354.62H146.9M144.5 347.96H146.9M144.5 341.29H146.9M144.5 334.63H146.9M144.5 327.97H146.9M144.5 321.30H146.9M144.5 314.64H146.9M144.5 307.97H146.9M144.5 301.31H146.9M143.0 294.65H146.9M144.5 287.98H146.9M144.5 281.32H146.9M144.5 274.66H146.9M144.5 267.99H146.9M144.5 261.33H146.9M144.5 254.67H146.9M144.5 248.00H146.9M144.5 241.34H146.9M144.5 234.68H146.9M143.0 228.01H146.9M144.5 221.35H146.9M144.5 214.69H146.9M144.5 208.02H146.9M144.5 201.36H146.9M144.5 194.70H146.9M144.5 188.03H146.9M144.5 181.37H146.9M144.5 174.71H146.9M144.5 168.04H146.9M143.0 161.38H146.9M144.5 154.72H146.9M144.5 148.05H146.9M144.5 141.39H146.9M144.5 134.73H146.9M144.5 128.06H146.9M144.5 121.40H146.9M144.5 114.74H146.9M144.5 108.07H146.9M144.5 101.41H146.9M143.0 94.75H146.9M144.5 88.08H146.9M144.5 81.42H146.9M144.5 74.76H146.9M144.5 68.09H146.9M144.5 61.43H146.9M144.5 54.77H146.9" fill="none" stroke="#222" stroke-width="0.75" />
<text transform="translate(142.0 494.55) rotate(-90)" font-size="5.8" text-anchor="middle" fill="#111">0</text>
<text transform="translate(142.0 361.28) rotate(-90)" font-size="5.8" text-anchor="middle" fill="#111">400</text>
<text transform="translate(142.0 228.01) rotate(-90)" font-size="5.8" text-anchor="middle" fill="#111">800</text>
<text transform="translate(142.0 94.75) rotate(-90)" font-size="5.8" text-anchor="middle" fill="#111">1200</text>
<rect x="848.90" y="38.60" width="1.00" height="11.40" fill="#8a8884" />
<rect x="849.90" y="38.60" width="0.70" height="11.40" fill="#efeeea" />
<rect x="135.80" y="306.40" width="11.60" height="1.00" fill="#8a8884" />
<rect x="135.80" y="307.40" width="11.60" height="0.70" fill="#efeeea" />
<path d="M186.9 111.2Q186.9 110.3 187.8 110.3H213.9V105.8H263.8V110.3H313.9V105.8H363.8V110.3H413.9V105.8H463.8V110.3H513.9V105.8H563.8V110.3H613.9V105.8H663.8V110.3H714.9V191.3A14.4 14.4 0 0 1 700.5 205.6H312.5C280 205.6 250 218 231 239C227 244 222 247 216 247H186.9V186.5H190.4V174.8H186.9V136.5H190.4V124.8H186.9Z" fill="none" stroke="#404040" stroke-width="0.68" stroke-linejoin="round"/>
<path d="M186.9 337H216C222 337 227 340 231 345C250 366 280 378.6 312.5 378.8H700.5A14.4 14.4 0 0 1 714.9 393.2V478.3H663.8V474.1H613.9V478.3H563.8V474.1H513.9V478.3H463.8V474.1H413.9V478.3H363.8V474.1H313.9V478.3H263.8V474.1H213.9V478.3H186.9V459.9H190.4V446.9H186.9V409.9H190.4V396.9H186.9Z" fill="none" stroke="#404040" stroke-width="0.68" stroke-linejoin="round"/>
<rect x="286.20" y="124.20" width="5.0" height="13.6" rx="1.6" fill="none" stroke="#404040" stroke-width="0.68"/>
<rect x="286.20" y="174.20" width="5.0" height="13.6" rx="1.6" fill="none" stroke="#404040" stroke-width="0.68"/>
<rect x="286.20" y="396.90" width="5.0" height="13.6" rx="1.6" fill="none" stroke="#404040" stroke-width="0.68"/>
<rect x="286.20" y="446.90" width="5.0" height="13.6" rx="1.6" fill="none" stroke="#404040" stroke-width="0.68"/>
<rect x="386.20" y="124.20" width="5.0" height="13.6" rx="1.6" fill="none" stroke="#404040" stroke-width="0.68"/>
<rect x="386.20" y="174.20" width="5.0" height="13.6" rx="1.6" fill="none" stroke="#404040" stroke-width="0.68"/>
<rect x="386.20" y="396.90" width="5.0" height="13.6" rx="1.6" fill="none" stroke="#404040" stroke-width="0.68"/>
<rect x="386.20" y="446.90" width="5.0" height="13.6" rx="1.6" fill="none" stroke="#404040" stroke-width="0.68"/>
<rect x="485.80" y="124.20" width="5.0" height="13.6" rx="1.6" fill="none" stroke="#404040" stroke-width="0.68"/>
<rect x="485.80" y="174.20" width="5.0" height="13.6" rx="1.6" fill="none" stroke="#404040" stroke-width="0.68"/>
<rect x="485.80" y="396.90" width="5.0" height="13.6" rx="1.6" fill="none" stroke="#404040" stroke-width="0.68"/>
<rect x="485.80" y="446.90" width="5.0" height="13.6" rx="1.6" fill="none" stroke="#404040" stroke-width="0.68"/>
<rect x="585.80" y="124.20" width="5.0" height="13.6" rx="1.6" fill="none" stroke="#404040" stroke-width="0.68"/>
<rect x="585.80" y="174.20" width="5.0" height="13.6" rx="1.6" fill="none" stroke="#404040" stroke-width="0.68"/>
<rect x="585.80" y="396.90" width="5.0" height="13.6" rx="1.6" fill="none" stroke="#404040" stroke-width="0.68"/>
<rect x="585.80" y="446.90" width="5.0" height="13.6" rx="1.6" fill="none" stroke="#404040" stroke-width="0.68"/>
<rect x="685.60" y="124.20" width="5.0" height="13.6" rx="1.6" fill="none" stroke="#404040" stroke-width="0.68"/>
<rect x="685.60" y="174.20" width="5.0" height="13.6" rx="1.6" fill="none" stroke="#404040" stroke-width="0.68"/>
<rect x="685.60" y="396.90" width="5.0" height="13.6" rx="1.6" fill="none" stroke="#404040" stroke-width="0.68"/>
<rect x="685.60" y="446.90" width="5.0" height="13.6" rx="1.6" fill="none" stroke="#404040" stroke-width="0.68"/>
<path d="M199.6 262.0Q199.6 260.0 201.2 260.0H218.4V255.8H230.6V260.0H267.9V255.8H280.6V260.0H293.7Q295.2 260.0 295.2 261.5V273.7H299.1V287.0H295.2V323.7H299.1V337.0H295.2V355.7A95.6 94 0 0 1 199.6 262.0Z" fill="none" stroke="#404040" stroke-width="0.68" stroke-linejoin="round"/>
<path d="M294.9 220.1Q294.9 218.1 296.5 218.1H313.7V213.9H325.9V218.1H363.2V213.9H375.9V218.1H389.0Q390.5 218.1 390.5 219.6V231.8H394.4V245.1H390.5V281.8H394.4V295.1H390.5V313.8A95.6 94 0 0 1 294.9 220.1Z" fill="none" stroke="#404040" stroke-width="0.68" stroke-linejoin="round"/>
<path d="M613.8 220.6Q613.8 218.6 615.4 218.6H632.6V214.4H644.8V218.6H682.1V214.4H694.8V218.6H707.9Q709.4 218.6 709.4 220.1V232.3H713.3V245.6H709.4V282.3H713.3V295.6H709.4V314.3A95.6 94 0 0 1 613.8 220.6Z" fill="none" stroke="#404040" stroke-width="0.68" stroke-linejoin="round"/>
<path d="M408.6 218.2V231.9H404.8V245.1H408.6V281.9H404.8V295.1H408.6V314H420" fill="none" stroke="#404040" stroke-width="0.68" stroke-linejoin="round"/>
<path d="M556 254.6A95.6 94 0 0 1 651.9 350.3H633.4V354.4H620.6V350.3H583V354.4H570V350.3H556Z" fill="none" stroke="#404040" stroke-width="0.68" stroke-linejoin="round"/>
<rect x="862.10" y="52.50" width="7.50" height="478.80" fill="#eceae5" />
<rect x="862.10" y="52.50" width="7.50" height="7.90" fill="#d4d0c8" />
<path d="M862.38 60.12V52.77H869.33" fill="none" stroke="#ffffff" stroke-width="0.55" />
<path d="M862.38 60.12H869.33V52.77" fill="none" stroke="#404040" stroke-width="0.55" />
<path d="M862.93 59.57H868.77V53.33" fill="none" stroke="#808080" stroke-width="0.55" />
<path d="M864.1 57.6H867.6L865.85 55.6Z" fill="#000" stroke="none" stroke-width="0.55" />
<rect x="862.10" y="201.90" width="7.50" height="180.60" fill="#d4d0c8" />
<path d="M862.38 382.23V202.18H869.33" fill="none" stroke="#ffffff" stroke-width="0.55" />
<path d="M862.38 382.23H869.33V202.18" fill="none" stroke="#404040" stroke-width="0.55" />
<path d="M862.93 381.68H868.77V202.72" fill="none" stroke="#808080" stroke-width="0.55" />
<rect x="862.10" y="524.00" width="7.50" height="7.40" fill="#d4d0c8" />
<path d="M862.38 531.12V524.27H869.33" fill="none" stroke="#ffffff" stroke-width="0.55" />
<path d="M862.38 531.12H869.33V524.27" fill="none" stroke="#404040" stroke-width="0.55" />
<path d="M862.93 530.57H868.77V524.83" fill="none" stroke="#808080" stroke-width="0.55" />
<path d="M864.1 526.8H867.6L865.85 528.8Z" fill="#000" stroke="none" stroke-width="0.55" />
<rect x="149.60" y="531.30" width="712.50" height="9.40" fill="#eceae5" />
<rect x="149.60" y="531.30" width="8.40" height="9.40" fill="#d4d0c8" />
<path d="M149.88 540.42V531.57H157.72" fill="none" stroke="#ffffff" stroke-width="0.55" />
<path d="M149.88 540.42H157.72V531.57" fill="none" stroke="#404040" stroke-width="0.55" />
<path d="M150.42 539.87H157.18V532.12" fill="none" stroke="#808080" stroke-width="0.55" />
<path d="M154.9 534.3V537.7L152.6 536Z" fill="#000" stroke="none" stroke-width="0.55" />
<rect x="384.40" y="531.30" width="196.90" height="9.40" fill="#d4d0c8" />
<path d="M384.67 540.42V531.57H581.02" fill="none" stroke="#ffffff" stroke-width="0.55" />
<path d="M384.67 540.42H581.02V531.57" fill="none" stroke="#404040" stroke-width="0.55" />
<path d="M385.22 539.87H580.47V532.12" fill="none" stroke="#808080" stroke-width="0.55" />
<rect x="854.00" y="531.30" width="8.10" height="9.40" fill="#d4d0c8" />
<path d="M854.27 540.42V531.57H861.83" fill="none" stroke="#ffffff" stroke-width="0.55" />
<path d="M854.27 540.42H861.83V531.57" fill="none" stroke="#404040" stroke-width="0.55" />
<path d="M854.83 539.87H861.27V532.12" fill="none" stroke="#808080" stroke-width="0.55" />
<path d="M857.0 534.3V537.7L859.3 536Z" fill="#000" stroke="none" stroke-width="0.55" />
<rect x="862.10" y="531.30" width="7.50" height="9.40" fill="#d4d0c8" />
<rect x="409.80" y="127.70" width="205.60" height="297.20" fill="#d4d0c8" />
<path d="M410.07 424.62V127.98H615.12" fill="none" stroke="#d4d0c8" stroke-width="0.55" />
<path d="M410.62 424.07V128.53H614.57" fill="none" stroke="#ffffff" stroke-width="0.55" />
<path d="M410.07 424.62H615.12V127.98" fill="none" stroke="#404040" stroke-width="0.9" />
<path d="M410.62 423.96H614.47V128.53" fill="none" stroke="#808080" stroke-width="0.7" />
<rect x="411.20" y="128.60" width="202.60" height="9.30" fill="url(#gDlg)" />
<text x="411.80" y="135.65" font-size="6.4" fill="#ffffff" font-weight="bold" stroke="#ffffff" stroke-width="0.22" textLength="59.70" lengthAdjust="spacingAndGlyphs" >Specify Pass Depths</text>
<text x="416.50" y="150.55" font-size="6.4" fill="#000" font-weight="bold" stroke="#000" stroke-width="0.22" textLength="56.25" lengthAdjust="spacingAndGlyphs" >Total Depth Of Cut:</text>
<text x="479.60" y="150.75" font-size="6.4" fill="#000" textLength="21.30" lengthAdjust="spacingAndGlyphs" >12.5 mm</text>
<line x1="416.30" y1="156.60" x2="592.00" y2="156.60" stroke="#808080" stroke-width="0.55" />
<line x1="416.30" y1="157.15" x2="592.00" y2="157.15" stroke="#ffffff" stroke-width="0.55" />
<text x="416.50" y="167.15" font-size="6.4" fill="#000" font-weight="bold" stroke="#000" stroke-width="0.22" textLength="36.25" lengthAdjust="spacingAndGlyphs" >Pass Depths</text>
<rect x="419.20" y="173.40" width="14.80" height="106.10" fill="#f6bb60" />
<line x1="419.40" y1="173.40" x2="419.40" y2="279.50" stroke="#5a4010" stroke-width="0.85" />
<line x1="433.80" y1="173.40" x2="433.80" y2="279.50" stroke="#5a4010" stroke-width="0.85" />
<line x1="419.20" y1="203.72" x2="434.20" y2="203.72" stroke="#5a4218" stroke-width="0.7" />
<rect x="433.60" y="203.02" width="2.50" height="1.40" fill="#000" />
<line x1="419.20" y1="218.88" x2="434.20" y2="218.88" stroke="#5a4218" stroke-width="0.7" />
<rect x="433.60" y="218.18" width="2.50" height="1.40" fill="#000" />
<line x1="419.20" y1="234.04" x2="434.20" y2="234.04" stroke="#5a4218" stroke-width="0.7" />
<rect x="433.60" y="233.34" width="2.50" height="1.40" fill="#000" />
<line x1="419.20" y1="249.20" x2="434.20" y2="249.20" stroke="#5a4218" stroke-width="0.7" />
<rect x="433.60" y="248.50" width="2.50" height="1.40" fill="#000" />
<line x1="419.20" y1="264.36" x2="434.20" y2="264.36" stroke="#5a4218" stroke-width="0.7" />
<rect x="433.60" y="263.66" width="2.50" height="1.40" fill="#000" />
<line x1="419.20" y1="279.52" x2="434.20" y2="279.52" stroke="#5a4218" stroke-width="0.7" />
<rect x="433.60" y="278.82" width="2.50" height="1.40" fill="#000" />
<line x1="419.20" y1="188.60" x2="436.20" y2="188.60" stroke="#e81c1c" stroke-width="1.0" />
<rect x="443.90" y="174.40" width="39.60" height="86.00" fill="#ffffff" />
<path d="M444.17 260.12V174.68H483.23" fill="none" stroke="#747474" stroke-width="0.65" />
<path d="M444.72 259.57V175.22H482.68" fill="none" stroke="#3a3a3a" stroke-width="0.65" />
<path d="M444.17 260.12H483.23V174.68" fill="none" stroke="#ffffff" stroke-width="0.55" />
<path d="M444.72 259.57H482.68V175.22" fill="none" stroke="#d4d0c8" stroke-width="0.55" />
<rect x="445.10" y="175.50" width="37.40" height="6.80" fill="#0a246a" />
<text x="445.90" y="181.15" font-size="6.4" fill="#ffffff" textLength="14.60" lengthAdjust="spacingAndGlyphs" >1.786</text>
<text x="445.90" y="188.15" font-size="6.4" fill="#000" textLength="14.60" lengthAdjust="spacingAndGlyphs" >3.571</text>
<text x="445.90" y="195.15" font-size="6.4" fill="#000" textLength="14.60" lengthAdjust="spacingAndGlyphs" >5.357</text>
<text x="445.90" y="202.15" font-size="6.4" fill="#000" textLength="14.60" lengthAdjust="spacingAndGlyphs" >7.143</text>
<text x="445.90" y="209.15" font-size="6.4" fill="#000" textLength="14.60" lengthAdjust="spacingAndGlyphs" >8.929</text>
<text x="445.90" y="216.15" font-size="6.4" fill="#000" textLength="17.60" lengthAdjust="spacingAndGlyphs" >10.714</text>
<text x="445.90" y="223.15" font-size="6.4" fill="#000" textLength="11.60" lengthAdjust="spacingAndGlyphs" >12.5</text>
<text x="490.30" y="179.45" font-size="6.4" fill="#000" textLength="91.90" lengthAdjust="spacingAndGlyphs" >'Double Click' on the image to add or</text>
<text x="490.30" y="186.35" font-size="6.4" fill="#000" textLength="103.50" lengthAdjust="spacingAndGlyphs" >remove a pass. To edit an existing pass,</text>
<text x="490.30" y="193.25" font-size="6.4" fill="#000" textLength="104.30" lengthAdjust="spacingAndGlyphs" >click on the image or list to select it, then</text>
<text x="490.30" y="200.15" font-size="6.4" fill="#000" textLength="105.70" lengthAdjust="spacingAndGlyphs" >enter new information in the fields below.</text>
<text x="491.25" y="216.75" font-size="6.4" fill="#000" textLength="18.35" lengthAdjust="spacingAndGlyphs" >Pass: 1</text>
<text x="519.00" y="216.75" font-size="6.4" fill="#000" textLength="17.25" lengthAdjust="spacingAndGlyphs" >Depth:</text>
<rect x="541.00" y="209.00" width="25.60" height="12.00" fill="#ffffff" />
<path d="M541.27 220.72V209.28H566.33" fill="none" stroke="#747474" stroke-width="0.65" />
<path d="M541.83 220.18V209.82H565.77" fill="none" stroke="#3a3a3a" stroke-width="0.65" />
<path d="M541.27 220.72H566.33V209.28" fill="none" stroke="#ffffff" stroke-width="0.55" />
<path d="M541.83 220.18H565.77V209.82" fill="none" stroke="#d4d0c8" stroke-width="0.55" />
<text x="544.40" y="217.15" font-size="6.4" fill="#000" textLength="14.35" lengthAdjust="spacingAndGlyphs" >1.786</text>
<text x="569.75" y="216.75" font-size="6.4" fill="#000" textLength="8.75" lengthAdjust="spacingAndGlyphs" >mm</text>
<text x="491.25" y="228.75" font-size="6.4" fill="#000" textLength="67.25" lengthAdjust="spacingAndGlyphs" >Depth from previous pass:</text>
<text x="564.40" y="228.75" font-size="6.4" fill="#000" textLength="24.35" lengthAdjust="spacingAndGlyphs" >1.786 mm</text>
<rect x="499.40" y="233.60" width="34.20" height="11.20" fill="#d4d0c8" />
<path d="M499.67 244.52V233.88H533.33" fill="none" stroke="#ffffff" stroke-width="0.55" />
<path d="M499.67 244.52H533.33V233.88" fill="none" stroke="#404040" stroke-width="0.55" />
<path d="M500.22 243.97H532.77V234.42" fill="none" stroke="#808080" stroke-width="0.55" />
<text x="507.75" y="241.25" font-size="6.4" fill="#000" textLength="16.65" lengthAdjust="spacingAndGlyphs" >Delete</text>
<rect x="554.40" y="233.60" width="34.40" height="11.20" fill="#d4d0c8" />
<path d="M554.67 244.52V233.88H588.52" fill="none" stroke="#ffffff" stroke-width="0.55" />
<path d="M554.67 244.52H588.52V233.88" fill="none" stroke="#404040" stroke-width="0.55" />
<path d="M555.23 243.97H587.97V234.42" fill="none" stroke="#808080" stroke-width="0.55" />
<text x="564.30" y="241.80" font-size="6.4" fill="#ffffff" textLength="15.00" lengthAdjust="spacingAndGlyphs" >Apply</text>
<text x="563.75" y="241.25" font-size="6.4" fill="#808080" textLength="15.00" lengthAdjust="spacingAndGlyphs" >Apply</text>
<rect x="498.60" y="248.20" width="90.40" height="12.40" fill="#d4d0c8" />
<path d="M498.88 260.32V248.47H588.73" fill="none" stroke="#ffffff" stroke-width="0.55" />
<path d="M498.88 260.32H588.73V248.47" fill="none" stroke="#404040" stroke-width="0.55" />
<path d="M499.43 259.77H588.17V249.02" fill="none" stroke="#808080" stroke-width="0.55" />
<text x="523.10" y="256.55" font-size="6.4" fill="#000" textLength="39.80" lengthAdjust="spacingAndGlyphs" >Clear All Passes</text>
<line x1="444.00" y1="267.80" x2="607.00" y2="267.80" stroke="#808080" stroke-width="0.55" />
<line x1="444.00" y1="268.35" x2="607.00" y2="268.35" stroke="#ffffff" stroke-width="0.55" />
<rect x="444.00" y="274.10" width="6.30" height="6.30" fill="#ffffff" />
<path d="M444.27 280.13V274.38H450.03" fill="none" stroke="#747474" stroke-width="0.65" />
<path d="M444.82 279.58V274.93H449.48" fill="none" stroke="#3a3a3a" stroke-width="0.65" />
<path d="M444.27 280.13H450.03V274.38" fill="none" stroke="#ffffff" stroke-width="0.55" />
<path d="M444.82 279.58H449.48V274.93" fill="none" stroke="#d4d0c8" stroke-width="0.55" />
<text x="453.10" y="279.75" font-size="6.4" fill="#000" font-weight="bold" stroke="#000" stroke-width="0.22" textLength="70.90" lengthAdjust="spacingAndGlyphs" >Set Last Pass Thickness</text>
<rect x="526.00" y="272.30" width="25.60" height="11.40" fill="#d4d0c8" />
<path d="M526.27 283.43V272.57H551.33" fill="none" stroke="#747474" stroke-width="0.65" />
<path d="M526.83 282.88V273.12H550.77" fill="none" stroke="#3a3a3a" stroke-width="0.65" />
<path d="M526.27 283.43H551.33V272.57" fill="none" stroke="#ffffff" stroke-width="0.55" />
<path d="M526.83 282.88H550.77V273.12" fill="none" stroke="#d4d0c8" stroke-width="0.55" />
<text x="529.00" y="279.95" font-size="6.4" fill="#8a8a86" textLength="8.00" lengthAdjust="spacingAndGlyphs" >0.0</text>
<text x="552.50" y="279.75" font-size="6.4" fill="#000" textLength="8.75" lengthAdjust="spacingAndGlyphs" >mm</text>
<rect x="573.10" y="271.60" width="32.20" height="11.70" fill="#d4d0c8" />
<path d="M573.38 283.03V271.88H605.03" fill="none" stroke="#ffffff" stroke-width="0.55" />
<path d="M573.38 283.03H605.03V271.88" fill="none" stroke="#404040" stroke-width="0.55" />
<path d="M573.93 282.48H604.48V272.43" fill="none" stroke="#808080" stroke-width="0.55" />
<text x="581.80" y="280.30" font-size="6.4" fill="#ffffff" textLength="15.00" lengthAdjust="spacingAndGlyphs" >Apply</text>
<text x="581.25" y="279.75" font-size="6.4" fill="#808080" textLength="15.00" lengthAdjust="spacingAndGlyphs" >Apply</text>
<line x1="416.30" y1="287.80" x2="607.00" y2="287.80" stroke="#808080" stroke-width="0.55" />
<line x1="416.30" y1="288.35" x2="607.00" y2="288.35" stroke="#ffffff" stroke-width="0.55" />
<path d="M421.6 297.0H416.7V402.4H607.4V297.0H482" fill="none" stroke="#808080" stroke-width="0.55" />
<path d="M421.6 297.55H417.25V401.85M416.7 402.95H607.95V297.0M482 297.55H606.85" fill="none" stroke="#ffffff" stroke-width="0.55" />
<text x="422.50" y="299.05" font-size="6.4" fill="#000" textLength="58.40" lengthAdjust="spacingAndGlyphs" >Pass Depth List Utilities</text>
<text x="422.50" y="309.75" font-size="6.4" fill="#000" textLength="117.25" lengthAdjust="spacingAndGlyphs" >Populate pass depth list using tool pass depth</text>
<text x="434.00" y="320.25" font-size="6.4" fill="#000" textLength="144.10" lengthAdjust="spacingAndGlyphs" >2.032 mm tool pass depth - 7 passes at 1.786 mm / pass</text>
<rect x="433.00" y="335.10" width="6.30" height="6.30" fill="#ffffff" />
<path d="M433.27 341.13V335.38H439.03" fill="none" stroke="#747474" stroke-width="0.65" />
<path d="M433.82 340.58V335.93H438.48" fill="none" stroke="#3a3a3a" stroke-width="0.65" />
<path d="M433.27 341.13H439.03V335.38" fill="none" stroke="#ffffff" stroke-width="0.55" />
<path d="M433.82 340.58H438.48V335.93" fill="none" stroke="#d4d0c8" stroke-width="0.55" />
<text x="442.10" y="341.00" font-size="6.4" fill="#000" textLength="78.80" lengthAdjust="spacingAndGlyphs" >Maintain exact tool pass depth</text>
<rect x="565.00" y="332.60" width="40.20" height="12.20" fill="#d4d0c8" />
<path d="M565.27 344.53V332.88H604.93" fill="none" stroke="#ffffff" stroke-width="0.55" />
<path d="M565.27 344.53H604.93V332.88" fill="none" stroke="#404040" stroke-width="0.55" />
<path d="M565.83 343.98H604.38V333.43" fill="none" stroke="#808080" stroke-width="0.55" />
<text x="570.60" y="341.00" font-size="6.4" fill="#000" textLength="28.40" lengthAdjust="spacingAndGlyphs" >Set Passes</text>
<line x1="425.90" y1="348.40" x2="605.00" y2="348.40" stroke="#808080" stroke-width="0.55" />
<line x1="425.90" y1="348.95" x2="605.00" y2="348.95" stroke="#ffffff" stroke-width="0.55" />
<text x="422.50" y="362.25" font-size="6.4" fill="#000" textLength="122.50" lengthAdjust="spacingAndGlyphs" >Populate pass depth list using number of passes</text>
<text x="429.00" y="374.50" font-size="6.4" fill="#000" textLength="73.10" lengthAdjust="spacingAndGlyphs" >7 passes at 1.786 mm / pass</text>
<text x="434.00" y="395.85" font-size="6.4" fill="#000" textLength="49.00" lengthAdjust="spacingAndGlyphs" >Number Of Passes:</text>
<rect x="495.00" y="388.50" width="23.80" height="11.30" fill="#ffffff" />
<path d="M495.27 399.53V388.77H518.52" fill="none" stroke="#747474" stroke-width="0.65" />
<path d="M495.82 398.98V389.32H517.97" fill="none" stroke="#3a3a3a" stroke-width="0.65" />
<path d="M495.27 399.53H518.52V388.77" fill="none" stroke="#ffffff" stroke-width="0.55" />
<path d="M495.82 398.98H517.97V389.32" fill="none" stroke="#d4d0c8" stroke-width="0.55" />
<text x="497.60" y="396.25" font-size="6.4" fill="#000" textLength="3.20" lengthAdjust="spacingAndGlyphs" >7</text>
<rect x="511.00" y="389.60" width="6.70" height="4.60" fill="#d4d0c8" />
<path d="M511.27 393.93V389.88H517.43" fill="none" stroke="#ffffff" stroke-width="0.55" />
<path d="M511.27 393.93H517.43V389.88" fill="none" stroke="#404040" stroke-width="0.55" />
<path d="M511.82 393.38H516.88V390.43" fill="none" stroke="#808080" stroke-width="0.55" />
<rect x="511.00" y="394.20" width="6.70" height="4.50" fill="#d4d0c8" />
<path d="M511.27 398.43V394.47H517.43" fill="none" stroke="#ffffff" stroke-width="0.55" />
<path d="M511.27 398.43H517.43V394.47" fill="none" stroke="#404040" stroke-width="0.55" />
<path d="M511.82 397.88H516.88V395.02" fill="none" stroke="#808080" stroke-width="0.55" />
<path d="M513.3 392.6H515.5L514.4 391.2Z" fill="#000" stroke="none" stroke-width="0.55" />
<path d="M513.3 395.8H515.5L514.4 397.2Z" fill="#000" stroke="none" stroke-width="0.55" />
<rect x="565.00" y="387.20" width="40.40" height="12.20" fill="#d4d0c8" />
<path d="M565.27 399.12V387.47H605.12" fill="none" stroke="#ffffff" stroke-width="0.55" />
<path d="M565.27 399.12H605.12V387.47" fill="none" stroke="#404040" stroke-width="0.55" />
<path d="M565.83 398.57H604.57V388.02" fill="none" stroke="#808080" stroke-width="0.55" />
<text x="570.60" y="395.65" font-size="6.4" fill="#000" textLength="28.40" lengthAdjust="spacingAndGlyphs" >Set Passes</text>
<rect x="522.20" y="408.00" width="39.80" height="11.80" fill="#000000" />
<rect x="522.75" y="408.55" width="38.70" height="10.70" fill="#d4d0c8" />
<path d="M523.02 418.98V408.82H561.18" fill="none" stroke="#ffffff" stroke-width="0.55" />
<path d="M523.02 418.98H561.18V408.82" fill="none" stroke="#404040" stroke-width="0.55" />
<path d="M523.58 418.43H560.62V409.38" fill="none" stroke="#808080" stroke-width="0.55" />
<text x="537.50" y="416.15" font-size="6.4" fill="#000" textLength="7.50" lengthAdjust="spacingAndGlyphs" >OK</text>
<rect x="568.10" y="408.00" width="40.40" height="11.80" fill="#d4d0c8" />
<path d="M568.38 419.53V408.27H608.23" fill="none" stroke="#ffffff" stroke-width="0.55" />
<path d="M568.38 419.53H608.23V408.27" fill="none" stroke="#404040" stroke-width="0.55" />
<path d="M568.93 418.98H607.67V408.82" fill="none" stroke="#808080" stroke-width="0.55" />
<text x="579.10" y="416.15" font-size="6.4" fill="#000" textLength="17.80" lengthAdjust="spacingAndGlyphs" >Cancel</text>
<rect x="882.80" y="39.70" width="133.60" height="19.50" fill="#ffffff" rx="1.2" />
<g transform="translate(894.3 49.2) rotate(-20)"><path d="M-6.6 -5.6H6.0L6.8 5.0H-5.8Z" fill="#d9b88e" stroke="#8a6a48" stroke-width="0.5"/><path d="M-5.8 5.0L-5.4 6.6H7.2L6.8 5.0Z" fill="#8a6848"/><path d="M-3.8 -3.2H3.6L4.0 2.8H-3.4Z" fill="#ecd6b4" stroke="#4a3422" stroke-width="1.1"/><path d="M-1.8 -1.4H2.0L2.2 1.2H-1.6Z" fill="#f4e6cc"/></g>
<text x="909.00" y="52.55" font-size="6.4" fill="#000" font-weight="bold" stroke="#000" stroke-width="0.22" textLength="57.00" lengthAdjust="spacingAndGlyphs" >2D Profile Toolpath</text>
<rect x="882.80" y="65.00" width="133.60" height="44.00" fill="#ffffff" rx="1.2" />
<text x="886.00" y="71.95" font-size="6.4" fill="#000" font-weight="bold" stroke="#000" stroke-width="0.22" textLength="44.60" lengthAdjust="spacingAndGlyphs" >Cutting Depths</text>
<path d="M892.4 78.6H895.6V84.0H898.4V87.6H903.6V83.6H906.8V90.8H892.4Z" fill="#a2a2a4" stroke="#606064" stroke-width="0.4" />
<path d="M895.6 84.0V87.8H903.8V83.6" fill="none" stroke="#3c3c40" stroke-width="0.8" />
<path d="M889.0 79.2C886.8 79.4 886.8 81.8 889.0 82M889.0 83.6C886.8 83.8 886.8 86.2 889.0 86.4" fill="none" stroke="#404040" stroke-width="0.5" />
<text x="910.90" y="81.00" font-size="6.4" fill="#000" textLength="39.10" lengthAdjust="spacingAndGlyphs" >Start Depth (D)</text>
<rect x="960.20" y="71.60" width="28.60" height="9.70" fill="#ffffff" />
<path d="M960.48 81.02V71.88H988.53" fill="none" stroke="#747474" stroke-width="0.65" />
<path d="M961.03 80.47V72.42H987.98" fill="none" stroke="#3a3a3a" stroke-width="0.65" />
<path d="M960.48 81.02H988.53V71.88" fill="none" stroke="#ffffff" stroke-width="0.55" />
<path d="M961.03 80.47H987.98V72.42" fill="none" stroke="#d4d0c8" stroke-width="0.55" />
<text x="963.40" y="79.25" font-size="6.4" fill="#000" textLength="7.80" lengthAdjust="spacingAndGlyphs" >0.0</text>
<text x="992.00" y="81.00" font-size="6.4" fill="#000" textLength="9.20" lengthAdjust="spacingAndGlyphs" >mm</text>
<text x="910.90" y="93.45" font-size="6.4" fill="#000" textLength="35.70" lengthAdjust="spacingAndGlyphs" >Cut Depth (C)</text>
<rect x="960.20" y="84.20" width="28.60" height="9.70" fill="#ffffff" />
<path d="M960.48 93.62V84.48H988.53" fill="none" stroke="#747474" stroke-width="0.65" />
<path d="M961.03 93.08V85.03H987.98" fill="none" stroke="#3a3a3a" stroke-width="0.65" />
<path d="M960.48 93.62H988.53V84.48" fill="none" stroke="#ffffff" stroke-width="0.55" />
<path d="M961.03 93.08H987.98V85.03" fill="none" stroke="#d4d0c8" stroke-width="0.55" />
<text x="963.40" y="91.85" font-size="6.4" fill="#000" textLength="11.00" lengthAdjust="spacingAndGlyphs" >12.5</text>
<text x="992.00" y="93.45" font-size="6.4" fill="#000" textLength="9.20" lengthAdjust="spacingAndGlyphs" >mm</text>
<rect x="887.00" y="98.70" width="6.40" height="6.40" fill="#ffffff" />
<path d="M887.27 104.83V98.98H893.12" fill="none" stroke="#747474" stroke-width="0.65" />
<path d="M887.83 104.28V99.53H892.57" fill="none" stroke="#3a3a3a" stroke-width="0.65" />
<path d="M887.27 104.83H893.12V98.98" fill="none" stroke="#ffffff" stroke-width="0.55" />
<path d="M887.83 104.28H892.57V99.53" fill="none" stroke="#d4d0c8" stroke-width="0.55" />
<path d="M888.54 101.77L889.69 103.05L891.99 100.49" fill="none" stroke="#000" stroke-width="1.0" />
<text x="896.00" y="104.65" font-size="6.4" fill="#000" font-weight="bold" stroke="#000" stroke-width="0.22" textLength="97.70" lengthAdjust="spacingAndGlyphs" >Show advanced toolpath options</text>
<rect x="882.80" y="112.70" width="133.60" height="41.70" fill="#ffffff" rx="1.2" />
<rect x="887.20" y="115.80" width="2.60" height="9.00" fill="#e8d478" stroke="#a89440" stroke-width="0.4" />
<rect x="887.20" y="121.20" width="2.60" height="3.60" fill="#c8b460" />
<text x="894.80" y="121.25" font-size="6.4" fill="#000" font-weight="bold" stroke="#000" stroke-width="0.22" textLength="13.70" lengthAdjust="spacingAndGlyphs" >Tool:</text>
<text x="912.75" y="121.25" font-size="6.4" fill="#000" textLength="54.25" lengthAdjust="spacingAndGlyphs" >1/8" Straight (13728)</text>
<rect x="936.20" y="125.20" width="34.80" height="10.20" fill="#d4d0c8" />
<path d="M936.48 135.12V125.48H970.73" fill="none" stroke="#ffffff" stroke-width="0.55" />
<path d="M936.48 135.12H970.73V125.48" fill="none" stroke="#404040" stroke-width="0.55" />
<path d="M937.03 134.58H970.17V126.03" fill="none" stroke="#808080" stroke-width="0.55" />
<text x="941.00" y="132.65" font-size="6.4" fill="#000" textLength="23.60" lengthAdjust="spacingAndGlyphs" >Select ...</text>
<rect x="979.30" y="125.20" width="34.80" height="10.20" fill="#d4d0c8" />
<path d="M979.57 135.12V125.48H1013.82" fill="none" stroke="#ffffff" stroke-width="0.55" />
<path d="M979.57 135.12H1013.82V125.48" fill="none" stroke="#404040" stroke-width="0.55" />
<path d="M980.12 134.58H1013.27V126.03" fill="none" stroke="#808080" stroke-width="0.55" />
<text x="987.20" y="132.65" font-size="6.4" fill="#000" textLength="18.00" lengthAdjust="spacingAndGlyphs" >Edit ...</text>
<line x1="886.00" y1="138.30" x2="1013.80" y2="138.30" stroke="#808080" stroke-width="0.55" />
<line x1="886.00" y1="138.85" x2="1013.80" y2="138.85" stroke="#ffffff" stroke-width="0.55" />
<text x="885.90" y="148.85" font-size="6.4" fill="#000" font-weight="bold" stroke="#000" stroke-width="0.22" textLength="22.60" lengthAdjust="spacingAndGlyphs" >Passes:</text>
<text x="914.00" y="148.85" font-size="6.4" fill="#000" textLength="3.00" lengthAdjust="spacingAndGlyphs" >7</text>
<rect x="935.90" y="141.50" width="78.20" height="10.30" fill="#000000" />
<rect x="936.45" y="142.05" width="77.10" height="9.20" fill="#d4d0c8" />
<path d="M936.72 150.97V142.33H1013.27" fill="none" stroke="#ffffff" stroke-width="0.55" />
<path d="M936.72 150.97H1013.27V142.33" fill="none" stroke="#404040" stroke-width="0.55" />
<path d="M937.27 150.43H1012.72V142.88" fill="none" stroke="#808080" stroke-width="0.55" />
<text x="955.90" y="149.05" font-size="6.4" fill="#000" textLength="36.50" lengthAdjust="spacingAndGlyphs" >Edit Passes ...</text>
<rect x="882.80" y="157.50" width="133.60" height="73.80" fill="#ffffff" rx="1.2" />
<text x="885.90" y="164.75" font-size="6.4" fill="#000" font-weight="bold" stroke="#000" stroke-width="0.22" textLength="54.70" lengthAdjust="spacingAndGlyphs" >Machine Vectors...</text>
<circle cx="893.40" cy="172.70" r="2.40" fill="#ffffff" />
<path d="M891.67 174.43A2.4 2.4 0 0 1 895.13 170.97" fill="none" stroke="#606060" stroke-width="0.8" />
<path d="M895.13 170.97A2.4 2.4 0 0 1 891.67 174.43" fill="none" stroke="#f4f4f4" stroke-width="0.8" />
<text x="899.60" y="175.75" font-size="6.4" fill="#000" font-weight="bold" stroke="#000" stroke-width="0.22" textLength="44.90" lengthAdjust="spacingAndGlyphs" >Outside / Right</text>
<circle cx="893.40" cy="182.10" r="2.40" fill="#ffffff" />
<path d="M891.67 183.83A2.4 2.4 0 0 1 895.13 180.37" fill="none" stroke="#606060" stroke-width="0.8" />
<path d="M895.13 180.37A2.4 2.4 0 0 1 891.67 183.83" fill="none" stroke="#f4f4f4" stroke-width="0.8" />
<text x="899.60" y="185.05" font-size="6.4" fill="#000" font-weight="bold" stroke="#000" stroke-width="0.22" textLength="36.30" lengthAdjust="spacingAndGlyphs" >Inside / Left</text>
<circle cx="893.40" cy="192.50" r="2.40" fill="#ffffff" />
<path d="M891.67 194.23A2.4 2.4 0 0 1 895.13 190.77" fill="none" stroke="#606060" stroke-width="0.8" />
<path d="M895.13 190.77A2.4 2.4 0 0 1 891.67 194.23" fill="none" stroke="#f4f4f4" stroke-width="0.8" />
<circle cx="893.40" cy="192.50" r="0.95" fill="#000" />
<text x="899.60" y="195.55" font-size="6.4" fill="#000" font-weight="bold" stroke="#000" stroke-width="0.22" textLength="7.70" lengthAdjust="spacingAndGlyphs" >On</text>
<rect x="959.00" y="167.00" width="25.00" height="24.40" fill="none" stroke="#808080" stroke-width="0.55" />
<line x1="959.00" y1="167.00" x2="959.00" y2="178.60" stroke="#e87070" stroke-width="0.6" />
<line x1="959.00" y1="167.00" x2="970.00" y2="167.00" stroke="#e87070" stroke-width="0.6" />
<circle cx="963.40" cy="167.00" r="2.40" fill="none" stroke="#e4c860" stroke-width="0.5" stroke-dasharray="0.8 0.6"/>
<circle cx="966.00" cy="167.00" r="2.40" fill="none" stroke="#e4c860" stroke-width="0.5" stroke-dasharray="0.8 0.6"/>
<circle cx="968.60" cy="167.00" r="2.40" fill="none" stroke="#e4c860" stroke-width="0.5" stroke-dasharray="0.8 0.6"/>
<circle cx="972.80" cy="166.80" r="3.00" fill="#f4ec70" stroke="#a89c38" stroke-width="0.6" />
<rect x="958.00" y="177.40" width="2.00" height="2.40" fill="#404040" />
<text x="885.90" y="204.15" font-size="6.4" fill="#000" font-weight="bold" stroke="#000" stroke-width="0.22" textLength="27.30" lengthAdjust="spacingAndGlyphs" >Direction</text>
<circle cx="925.40" cy="201.60" r="2.40" fill="#ffffff" />
<path d="M923.67 203.33A2.4 2.4 0 0 1 927.13 199.87" fill="none" stroke="#606060" stroke-width="0.8" />
<path d="M927.13 199.87A2.4 2.4 0 0 1 923.67 203.33" fill="none" stroke="#f4f4f4" stroke-width="0.8" />
<circle cx="925.40" cy="201.60" r="0.95" fill="#000" />
<text x="931.50" y="204.25" font-size="6.4" fill="#000" textLength="13.50" lengthAdjust="spacingAndGlyphs" >Climb</text>
<circle cx="957.40" cy="201.60" r="2.40" fill="#ffffff" />
<path d="M955.67 203.33A2.4 2.4 0 0 1 959.13 199.87" fill="none" stroke="#606060" stroke-width="0.8" />
<path d="M959.13 199.87A2.4 2.4 0 0 1 955.67 203.33" fill="none" stroke="#f4f4f4" stroke-width="0.8" />
<text x="963.70" y="204.25" font-size="6.4" fill="#000" textLength="33.30" lengthAdjust="spacingAndGlyphs" >Conventional</text>
<text x="885.90" y="217.45" font-size="6.4" fill="#9a9a96" textLength="42.50" lengthAdjust="spacingAndGlyphs" >Allowance offset</text>
<rect x="942.00" y="209.30" width="29.00" height="9.60" fill="#ffffff" />
<path d="M942.27 218.62V209.58H970.73" fill="none" stroke="#747474" stroke-width="0.65" />
<path d="M942.83 218.08V210.12H970.17" fill="none" stroke="#3a3a3a" stroke-width="0.65" />
<path d="M942.27 218.62H970.73V209.58" fill="none" stroke="#ffffff" stroke-width="0.55" />
<path d="M942.83 218.08H970.17V210.12" fill="none" stroke="#d4d0c8" stroke-width="0.55" />
<text x="945.20" y="216.85" font-size="6.4" fill="#9a9a96" textLength="7.80" lengthAdjust="spacingAndGlyphs" >0.0</text>
<text x="974.00" y="217.45" font-size="6.4" fill="#000" textLength="8.40" lengthAdjust="spacingAndGlyphs" >mm</text>
<rect x="886.70" y="222.30" width="6.40" height="6.40" fill="#ffffff" />
<path d="M886.98 228.43V222.58H892.83" fill="none" stroke="#747474" stroke-width="0.65" />
<path d="M887.53 227.88V223.12H892.27" fill="none" stroke="#3a3a3a" stroke-width="0.65" />
<path d="M886.98 228.43H892.83V222.58" fill="none" stroke="#ffffff" stroke-width="0.55" />
<path d="M887.53 227.88H892.27V223.12" fill="none" stroke="#d4d0c8" stroke-width="0.55" />
<text x="896.00" y="228.25" font-size="6.4" fill="#000" textLength="99.50" lengthAdjust="spacingAndGlyphs" >Use vector start points (don't optimize)</text>
<rect x="882.80" y="238.10" width="133.60" height="49.40" fill="#ffffff" rx="1.2" />
<text x="885.00" y="245.85" font-size="6.4" fill="#000" font-weight="bold" stroke="#000" stroke-width="0.22" textLength="28.20" lengthAdjust="spacingAndGlyphs" >Last Pass</text>
<rect x="890.30" y="252.30" width="6.40" height="6.40" fill="#ffffff" />
<path d="M890.57 258.43V252.58H896.42" fill="none" stroke="#747474" stroke-width="0.65" />
<path d="M891.12 257.88V253.12H895.87" fill="none" stroke="#3a3a3a" stroke-width="0.65" />
<path d="M890.57 258.43H896.42V252.58" fill="none" stroke="#ffffff" stroke-width="0.55" />
<path d="M891.12 257.88H895.87V253.12" fill="none" stroke="#d4d0c8" stroke-width="0.55" />
<text x="899.60" y="258.35" font-size="6.4" fill="#000" font-weight="bold" stroke="#000" stroke-width="0.22" textLength="64.40" lengthAdjust="spacingAndGlyphs" >Do separate last pass</text>
<rect x="889.80" y="275.20" width="7.20" height="7.40" fill="#909094" />
<rect x="889.80" y="275.20" width="2.40" height="7.40" fill="#b8b8bc" />
<path d="M897.6 282.4V270.4Q897.6 268.6 899.9 268.6Q902.2 268.6 902.2 270.4V276" fill="#ffffff" stroke="#50505c" stroke-width="0.6" />
<path d="M902.2 276H909.8M902.2 279.2H909.8M897.6 282.5H909.8" fill="none" stroke="#4048a0" stroke-width="1.0" />
<text x="897.90" y="268.65" font-size="5.0" fill="#000" font-weight="bold" stroke="#000" stroke-width="0.22" textLength="4.00" lengthAdjust="spacingAndGlyphs" >A</text>
<text x="916.80" y="269.75" font-size="6.4" fill="#9a9a96" textLength="35.00" lengthAdjust="spacingAndGlyphs" >Allowance (A)</text>
<rect x="959.00" y="262.00" width="31.30" height="11.40" fill="#ffffff" />
<path d="M959.27 273.12V262.27H990.02" fill="none" stroke="#747474" stroke-width="0.65" />
<path d="M959.83 272.57V262.82H989.47" fill="none" stroke="#3a3a3a" stroke-width="0.65" />
<path d="M959.27 273.12H990.02V262.27" fill="none" stroke="#ffffff" stroke-width="0.55" />
<path d="M959.83 272.57H989.47V262.82" fill="none" stroke="#d4d0c8" stroke-width="0.55" />
<text x="962.20" y="270.25" font-size="6.4" fill="#9a9a96" textLength="8.00" lengthAdjust="spacingAndGlyphs" >0.0</text>
<text x="995.00" y="270.45" font-size="6.4" fill="#9a9a96" textLength="8.50" lengthAdjust="spacingAndGlyphs" >mm</text>
<rect x="915.90" y="276.20" width="6.20" height="6.20" fill="#d4d0c8" />
<path d="M916.17 282.12V276.47H921.83" fill="none" stroke="#747474" stroke-width="0.65" />
<path d="M916.73 281.57V277.02H921.27" fill="none" stroke="#3a3a3a" stroke-width="0.65" />
<path d="M916.17 282.12H921.83V276.47" fill="none" stroke="#ffffff" stroke-width="0.55" />
<path d="M916.73 281.57H921.27V277.02" fill="none" stroke="#d4d0c8" stroke-width="0.55" />
<text x="925.00" y="282.15" font-size="6.4" fill="#9a9a96" textLength="45.00" lengthAdjust="spacingAndGlyphs" >Reverse direction</text>
<rect x="885.00" y="303.00" width="131.40" height="100.20" fill="#fcfcfc" />
<path d="M885.3 403.0V303.3" fill="none" stroke="#ffffff" stroke-width="0.6" />
<path d="M885.0 403.3H1015.4V303.2" fill="none" stroke="#55608c" stroke-width="1.5" />
<path d="M885.6 402.1H1015.2V303.2" fill="none" stroke="#8088a8" stroke-width="0.6" />
<rect x="908.00" y="293.60" width="20.00" height="9.40" fill="#8fa3e8" />
<path d="M908.3 303V294.4L908.9 293.8H927.1" fill="none" stroke="#c6d2f8" stroke-width="0.6" />
<path d="M927.7 294.2V303" fill="none" stroke="#4a557c" stroke-width="0.8" />
<text x="909.80" y="300.25" font-size="6.4" fill="#10102c" textLength="14.80" lengthAdjust="spacingAndGlyphs" >Leads</text>
<rect x="930.00" y="293.60" width="21.80" height="9.40" fill="#8fa3e8" />
<path d="M930.3 303V294.4L930.9 293.8H950.9" fill="none" stroke="#c6d2f8" stroke-width="0.6" />
<path d="M951.5 294.2V303" fill="none" stroke="#4a557c" stroke-width="0.8" />
<text x="931.50" y="300.25" font-size="6.4" fill="#10102c" textLength="17.50" lengthAdjust="spacingAndGlyphs" >Ramps</text>
<rect x="953.80" y="293.60" width="20.20" height="9.40" fill="#8fa3e8" />
<path d="M954.1 303V294.4L954.7 293.8H973.1" fill="none" stroke="#c6d2f8" stroke-width="0.6" />
<path d="M973.7 294.2V303" fill="none" stroke="#4a557c" stroke-width="0.8" />
<text x="955.90" y="300.25" font-size="6.4" fill="#10102c" textLength="14.80" lengthAdjust="spacingAndGlyphs" >Order</text>
<rect x="975.70" y="293.60" width="25.80" height="9.40" fill="#8fa3e8" />
<path d="M976.0 303V294.4L976.6 293.8H1000.6" fill="none" stroke="#c6d2f8" stroke-width="0.6" />
<path d="M1001.2 294.2V303" fill="none" stroke="#4a557c" stroke-width="0.8" />
<text x="977.75" y="300.25" font-size="6.4" fill="#10102c" textLength="20.25" lengthAdjust="spacingAndGlyphs" >Corners</text>
<rect x="883.80" y="292.60" width="23.20" height="11.00" fill="#94a6e6" />
<path d="M884.1 303.6V293.4L884.7 292.9H906.0" fill="none" stroke="#e4eafc" stroke-width="0.7" />
<path d="M906.9 293.2V303.4" fill="none" stroke="#4a557c" stroke-width="0.8" />
<line x1="907.20" y1="303.40" x2="1016.00" y2="303.40" stroke="#ffffff" stroke-width="0.7" />
<text x="887.90" y="300.25" font-size="6.4" fill="#000" font-weight="bold" stroke="#000" stroke-width="0.22" textLength="14.10" lengthAdjust="spacingAndGlyphs" >Tabs</text>
<rect x="891.80" y="310.50" width="6.10" height="6.10" fill="#ffffff" />
<path d="M892.07 316.33V310.77H897.62" fill="none" stroke="#747474" stroke-width="0.65" />
<path d="M892.62 315.78V311.32H897.07" fill="none" stroke="#3a3a3a" stroke-width="0.65" />
<path d="M892.07 316.33H897.62V310.77" fill="none" stroke="#ffffff" stroke-width="0.55" />
<path d="M892.62 315.78H897.07V311.32" fill="none" stroke="#d4d0c8" stroke-width="0.55" />
<text x="902.75" y="316.50" font-size="6.4" fill="#000" font-weight="bold" stroke="#000" stroke-width="0.22" textLength="61.25" lengthAdjust="spacingAndGlyphs" >Add tabs to toolpath</text>
<rect x="890.80" y="325.00" width="18.70" height="5.20" fill="#fbee9c" rx="0.8" />
<rect x="893.90" y="329.80" width="12.00" height="3.80" fill="#fbee9c" />
<rect x="890.80" y="333.20" width="18.70" height="5.00" fill="#f9e88c" rx="1.6" />
<line x1="891.80" y1="338.20" x2="908.60" y2="338.20" stroke="#d8bc58" stroke-width="0.6" />
<path d="M895.7 322.8V331.6M904.3 322.8V331.6" fill="none" stroke="#3a3a3a" stroke-width="0.65" />
<path d="M890.8 329.0H895.4M904.6 329.0H909.5" fill="none" stroke="#4a4a3a" stroke-width="0.55" />
<text x="913.70" y="333.35" font-size="6.4" fill="#9a9a96" textLength="17.80" lengthAdjust="spacingAndGlyphs" >Length</text>
<rect x="947.60" y="325.60" width="21.20" height="9.70" fill="#ffffff" />
<path d="M947.88 335.03V325.88H968.53" fill="none" stroke="#747474" stroke-width="0.65" />
<path d="M948.43 334.48V326.43H967.98" fill="none" stroke="#3a3a3a" stroke-width="0.65" />
<path d="M947.88 335.03H968.53V325.88" fill="none" stroke="#ffffff" stroke-width="0.55" />
<path d="M948.43 334.48H967.98V326.43" fill="none" stroke="#d4d0c8" stroke-width="0.55" />
<text x="950.80" y="333.25" font-size="6.4" fill="#9a9a96" textLength="8.00" lengthAdjust="spacingAndGlyphs" >4.0</text>
<text x="973.00" y="333.35" font-size="6.4" fill="#9a9a96" textLength="8.50" lengthAdjust="spacingAndGlyphs" >mm</text>
<rect x="891.00" y="346.80" width="18.60" height="7.60" fill="#fbee9c" rx="1.0" />
<line x1="891.40" y1="354.40" x2="909.40" y2="354.40" stroke="#d8bc58" stroke-width="0.7" />
<rect x="895.60" y="349.40" width="8.40" height="2.60" fill="#b89058" />
<path d="M904 349.2H910.4M904 352.2H910.4" fill="none" stroke="#3a3a3a" stroke-width="0.6" />
<text x="913.70" y="352.15" font-size="6.4" fill="#9a9a96" textLength="24.05" lengthAdjust="spacingAndGlyphs" >Thickness</text>
<rect x="947.60" y="344.80" width="21.20" height="9.70" fill="#ffffff" />
<path d="M947.88 354.23V345.07H968.53" fill="none" stroke="#747474" stroke-width="0.65" />
<path d="M948.43 353.68V345.62H967.98" fill="none" stroke="#3a3a3a" stroke-width="0.65" />
<path d="M947.88 354.23H968.53V345.07" fill="none" stroke="#ffffff" stroke-width="0.55" />
<path d="M948.43 353.68H967.98V345.62" fill="none" stroke="#d4d0c8" stroke-width="0.55" />
<text x="950.80" y="352.45" font-size="6.4" fill="#9a9a96" textLength="8.00" lengthAdjust="spacingAndGlyphs" >3.0</text>
<text x="973.00" y="352.15" font-size="6.4" fill="#9a9a96" textLength="8.50" lengthAdjust="spacingAndGlyphs" >mm</text>
<rect x="891.00" y="363.20" width="18.60" height="7.00" fill="#fbee9c" rx="1.0" />
<line x1="891.40" y1="370.20" x2="909.40" y2="370.20" stroke="#d8bc58" stroke-width="0.7" />
<path d="M894.6 368.6L900.2 365.6L905.8 368.6" fill="none" stroke="#c8a850" stroke-width="1.0" />
<rect x="914.00" y="362.80" width="6.10" height="6.10" fill="#d4d0c8" />
<path d="M914.27 368.63V363.07H919.83" fill="none" stroke="#747474" stroke-width="0.65" />
<path d="M914.83 368.08V363.62H919.27" fill="none" stroke="#3a3a3a" stroke-width="0.65" />
<path d="M914.27 368.63H919.83V363.07" fill="none" stroke="#ffffff" stroke-width="0.55" />
<path d="M914.83 368.08H919.27V363.62" fill="none" stroke="#d4d0c8" stroke-width="0.55" />
<text x="923.40" y="368.35" font-size="6.4" fill="#9a9a96" textLength="38.70" lengthAdjust="spacingAndGlyphs" >Create 3D tabs</text>
<rect x="959.00" y="386.20" width="40.60" height="11.00" fill="#d4d0c8" />
<path d="M959.27 396.93V386.47H999.33" fill="none" stroke="#ffffff" stroke-width="0.55" />
<path d="M959.27 396.93H999.33V386.47" fill="none" stroke="#404040" stroke-width="0.55" />
<path d="M959.83 396.38H998.77V387.02" fill="none" stroke="#808080" stroke-width="0.55" />
<text x="962.45" y="394.60" font-size="6.4" fill="#ffffff" textLength="32.90" lengthAdjust="spacingAndGlyphs" >Edit Tabs ...</text>
<text x="961.90" y="394.05" font-size="6.4" fill="#808080" textLength="32.90" lengthAdjust="spacingAndGlyphs" >Edit Tabs ...</text>
<rect x="882.80" y="408.80" width="133.60" height="62.50" fill="#ffffff" rx="1.2" />
<text x="887.10" y="417.85" font-size="6.4" fill="#000" textLength="15.90" lengthAdjust="spacingAndGlyphs" >Safe Z</text>
<text x="928.00" y="417.85" font-size="6.4" fill="#000" textLength="18.50" lengthAdjust="spacingAndGlyphs" >6.0 mm</text>
<text x="887.10" y="426.25" font-size="6.4" fill="#000" textLength="35.00" lengthAdjust="spacingAndGlyphs" >Home Position</text>
<text x="928.00" y="426.25" font-size="6.4" fill="#000" textLength="57.00" lengthAdjust="spacingAndGlyphs" >X:0.00 Y:0.00 Z:20.00</text>
<rect x="887.10" y="430.60" width="6.30" height="6.30" fill="#ffffff" />
<path d="M887.38 436.63V430.88H893.12" fill="none" stroke="#747474" stroke-width="0.65" />
<path d="M887.93 436.08V431.43H892.57" fill="none" stroke="#3a3a3a" stroke-width="0.65" />
<path d="M887.38 436.63H893.12V430.88" fill="none" stroke="#ffffff" stroke-width="0.55" />
<path d="M887.93 436.08H892.57V431.43" fill="none" stroke="#d4d0c8" stroke-width="0.55" />
<text x="896.00" y="436.25" font-size="6.4" fill="#000" font-weight="bold" stroke="#000" stroke-width="0.22" textLength="93.80" lengthAdjust="spacingAndGlyphs" >Project toolpath onto 3D model</text>
<line x1="886.00" y1="440.50" x2="1013.80" y2="440.50" stroke="#808080" stroke-width="0.55" />
<line x1="886.00" y1="441.05" x2="1013.80" y2="441.05" stroke="#ffffff" stroke-width="0.55" />
<text x="887.75" y="450.75" font-size="6.4" fill="#000" textLength="42.65" lengthAdjust="spacingAndGlyphs" >Vector Selection:</text>
<text x="939.30" y="450.75" font-size="6.4" fill="#000" textLength="18.45" lengthAdjust="spacingAndGlyphs" >Manual</text>
<rect x="977.75" y="443.70" width="36.00" height="10.00" fill="#d4d0c8" />
<path d="M978.02 453.43V443.97H1013.48" fill="none" stroke="#ffffff" stroke-width="0.55" />
<path d="M978.02 453.43H1013.48V443.97" fill="none" stroke="#404040" stroke-width="0.55" />
<path d="M978.58 452.88H1012.92V444.52" fill="none" stroke="#808080" stroke-width="0.55" />
<text x="981.20" y="451.05" font-size="6.4" fill="#000" textLength="28.80" lengthAdjust="spacingAndGlyphs" >Selector ...</text>
<line x1="886.00" y1="455.10" x2="1013.80" y2="455.10" stroke="#808080" stroke-width="0.55" />
<line x1="886.00" y1="455.65" x2="1013.80" y2="455.65" stroke="#ffffff" stroke-width="0.55" />
<text x="887.10" y="467.15" font-size="6.4" fill="#000" textLength="15.90" lengthAdjust="spacingAndGlyphs" >Name:</text>
<rect x="909.00" y="458.70" width="104.40" height="9.80" fill="#ffffff" />
<path d="M909.27 468.23V458.97H1013.12" fill="none" stroke="#747474" stroke-width="0.65" />
<path d="M909.83 467.68V459.52H1012.57" fill="none" stroke="#3a3a3a" stroke-width="0.65" />
<path d="M909.27 468.23H1013.12V458.97" fill="none" stroke="#ffffff" stroke-width="0.55" />
<path d="M909.83 467.68H1012.57V459.52" fill="none" stroke="#d4d0c8" stroke-width="0.55" />
<text x="911.70" y="466.05" font-size="6.4" fill="#000" textLength="20.30" lengthAdjust="spacingAndGlyphs" >Profile 1</text>
<rect x="882.40" y="476.00" width="38.60" height="11.30" fill="#d4d0c8" />
<path d="M882.67 487.03V476.27H920.73" fill="none" stroke="#ffffff" stroke-width="0.55" />
<path d="M882.67 487.03H920.73V476.27" fill="none" stroke="#404040" stroke-width="0.55" />
<path d="M883.23 486.48H920.17V476.82" fill="none" stroke="#808080" stroke-width="0.55" />
<text x="889.80" y="484.05" font-size="6.4" fill="#000" textLength="23.40" lengthAdjust="spacingAndGlyphs" >Calculate</text>
<rect x="977.75" y="476.00" width="39.30" height="11.30" fill="#d4d0c8" />
<path d="M978.02 487.03V476.27H1016.77" fill="none" stroke="#ffffff" stroke-width="0.55" />
<path d="M978.02 487.03H1016.77V476.27" fill="none" stroke="#404040" stroke-width="0.55" />
<path d="M978.58 486.48H1016.22V476.82" fill="none" stroke="#808080" stroke-width="0.55" />
<text x="989.80" y="484.05" font-size="6.4" fill="#000" textLength="14.00" lengthAdjust="spacingAndGlyphs" >Close</text>
<rect x="0.00" y="542.70" width="1024.00" height="10.00" fill="#d4d0c8" />
<text x="0.90" y="550.25" font-size="6.4" fill="#000" textLength="16.10" lengthAdjust="spacingAndGlyphs" >Ready</text>
<path d="M756.8 552.0V543.9H853.2" fill="none" stroke="#808080" stroke-width="0.5" />
<path d="M756.8 552.0H853.2V543.9" fill="none" stroke="#ffffff" stroke-width="0.5" />
<path d="M855.0 552.0V543.9H1023.0" fill="none" stroke="#808080" stroke-width="0.5" />
<path d="M855.0 552.0H1023.0V543.9" fill="none" stroke="#ffffff" stroke-width="0.5" />
<text x="758.20" y="550.25" font-size="6.4" fill="#000" textLength="65.00" lengthAdjust="spacingAndGlyphs" >X:2044.0726 Y:565.1089</text>
<rect x="0.00" y="552.70" width="1024.00" height="23.30" fill="#d4d0c8" />
<line x1="0.00" y1="553.30" x2="1024.00" y2="553.30" stroke="#ffffff" stroke-width="0.6" />
<rect x="0.80" y="555.00" width="28.00" height="19.90" fill="#d4d0c8" />
<path d="M1.08 574.62V555.27H28.53" fill="none" stroke="#ffffff" stroke-width="0.55" />
<path d="M1.08 574.62H28.53V555.27" fill="none" stroke="#404040" stroke-width="0.55" />
<path d="M1.62 574.07H27.98V555.83" fill="none" stroke="#808080" stroke-width="0.55" />
<path d="M3.2 560.4C4.6 559.6 5.6 559.8 6.4 560.4L5.8 563.6C5 563 4 563 2.6 563.6Z" fill="#e8502c" stroke="none" stroke-width="0.55" />
<path d="M6.9 560.6C7.8 561.2 8.8 561 9.8 560.4L9.2 563.6C8.2 564.2 7.2 564.2 6.3 563.8Z" fill="#58b03c" stroke="none" stroke-width="0.55" />
<path d="M2.4 564.4C3.8 563.8 4.8 563.8 5.6 564.4L5 567.6C4.2 567 3.2 567 1.8 567.6Z" fill="#3a78e0" stroke="none" stroke-width="0.55" />
<path d="M6.1 564.6C7 565.2 8 565 9 564.6L8.4 567.8C7.4 568.4 6.4 568.2 5.5 567.8Z" fill="#f0c02c" stroke="none" stroke-width="0.55" />
<text x="10.20" y="566.85" font-size="6.6" fill="#000" font-weight="bold" stroke="#000" stroke-width="0.22" textLength="15.55" lengthAdjust="spacingAndGlyphs" >Start</text>
<rect x="33.30" y="555.00" width="25.60" height="19.90" fill="#d4d0c8" />
<path d="M33.57 574.62V555.27H58.62" fill="none" stroke="#ffffff" stroke-width="0.55" />
<path d="M33.57 574.62H58.62V555.27" fill="none" stroke="#404040" stroke-width="0.55" />
<path d="M34.12 574.07H58.07V555.83" fill="none" stroke="#808080" stroke-width="0.55" />
<rect x="38.40" y="559.60" width="15.60" height="11.60" fill="#fbe9a0" stroke="#d8b860" stroke-width="0.5" rx="0.8" />
<rect x="38.40" y="558.20" width="6.60" height="2.20" fill="#f6dc84" stroke="#d8b860" stroke-width="0.4" />
<rect x="39.60" y="557.80" width="2.20" height="1.60" fill="#6ab04c" />
<rect x="43.60" y="558.20" width="2.20" height="1.60" fill="#e89a3c" />
<rect x="48.00" y="558.80" width="2.20" height="1.60" fill="#4c9ad8" />
<path d="M40.4 573.2L42.0 566.6H50.6L52.2 573.2Z" fill="#5db2e4" stroke="#3a8ccc" stroke-width="0.4" />
<rect x="44.40" y="569.60" width="3.80" height="3.40" fill="#f4e090" />
<rect x="65.60" y="555.00" width="17.00" height="19.90" fill="#d4d0c8" />
<path d="M65.88 574.62V555.27H82.32" fill="none" stroke="#ffffff" stroke-width="0.55" />
<path d="M65.88 574.62H82.32V555.27" fill="none" stroke="#404040" stroke-width="0.55" />
<path d="M66.42 574.07H81.77V555.83" fill="none" stroke="#808080" stroke-width="0.55" />
<path d="M68.2 566L74.4 560L81 562.4V570L74.2 573L68.2 570.6Z" fill="#2c48b8" stroke="#101c60" stroke-width="0.6" />
<path d="M70.4 565.2L74.6 561.8L78.8 563.6L74.6 567.4Z" fill="#f4e040" stroke="#a09020" stroke-width="0.4" />
<path d="M69 567.6L74.2 569.8L80.2 567M74.2 569.8V572.6" fill="none" stroke="#e8ecff" stroke-width="0.7" />
<rect x="86.80" y="555.00" width="25.20" height="19.90" fill="#ffffff" />
<path d="M87.1 574.9V555.3H112" fill="none" stroke="#404040" stroke-width="0.7" />
<path d="M87.1 574.7H111.8V555.3" fill="none" stroke="#f4f4f4" stroke-width="0.6" />
<path d="M93.6 561.4L99.4 560.2L100.4 565.2L110.6 557.6L99.0 571.8Z" fill="#17346e" stroke="none" stroke-width="0.55" />
<path d="M100.4 565.2L110.6 557.6L104.6 562.6Z" fill="#5f7fc0" stroke="none" stroke-width="0.55" />
<circle cx="126.40" cy="565.00" r="7.60" fill="#f08a1c" />
<circle cx="127.00" cy="563.40" r="5.60" fill="#2f6fd0" />
<path d="M119.0 563C119.6 559.6 121.6 558 123.6 557.8C122.8 559.4 123.4 560.6 124.6 561.2C126.6 561 128.6 562.4 128.8 564.6C129 567.6 125.8 569.2 123.4 567.6C121.8 566.4 121.6 564.6 122.4 563.4C121.2 563.2 119.8 563.4 119.0 563Z" fill="#f6a828" stroke="none" stroke-width="0.55" />
<path d="M119 565.4C119.4 570 123.4 572.8 127.4 572.6C131.6 572.2 134.4 568.6 134 564.4C133.4 568 130.4 570.4 126.8 570.2C123.4 570 120.4 568.4 119 565.4Z" fill="#e0541c" stroke="none" stroke-width="0.55" />
<rect x="140.20" y="555.00" width="25.40" height="19.90" fill="#d4d0c8" />
<path d="M140.47 574.62V555.27H165.32" fill="none" stroke="#ffffff" stroke-width="0.55" />
<path d="M140.47 574.62H165.32V555.27" fill="none" stroke="#404040" stroke-width="0.55" />
<path d="M141.02 574.07H164.78V555.83" fill="none" stroke="#808080" stroke-width="0.55" />
<rect x="146.40" y="558.20" width="12.80" height="14.60" fill="#b8dcf4" stroke="#88b4dc" stroke-width="0.5" rx="1.0" />
<rect x="148.20" y="559.80" width="9.20" height="3.60" fill="#e8f6ff" />
<rect x="148.20" y="565.00" width="2.60" height="1.80" fill="#e0f0fc" />
<rect x="148.20" y="567.60" width="2.60" height="1.80" fill="#e0f0fc" />
<rect x="148.20" y="570.20" width="2.60" height="1.80" fill="#e0f0fc" />
<rect x="151.60" y="565.00" width="2.60" height="1.80" fill="#e0f0fc" />
<rect x="151.60" y="567.60" width="2.60" height="1.80" fill="#e0f0fc" />
<rect x="151.60" y="570.20" width="2.60" height="1.80" fill="#e0f0fc" />
<rect x="155.00" y="565.00" width="2.60" height="1.80" fill="#e0f0fc" />
<rect x="155.00" y="567.60" width="2.60" height="1.80" fill="#e0f0fc" />
<rect x="155.00" y="570.20" width="2.60" height="1.80" fill="#e0f0fc" />
<path d="M926.6 574.3V554.9H1021.8" fill="none" stroke="#808080" stroke-width="0.6" />
<path d="M926.6 574.3H1021.8V554.9" fill="none" stroke="#ffffff" stroke-width="0.6" />
<path d="M929.6 563.4L931.0 562.0L932.4 563.4M929.6 565.6L931.0 564.2L932.4 565.6" fill="none" stroke="#000" stroke-width="0.8" />
<rect x="938.40" y="560.20" width="8.60" height="8.80" fill="#ffffff" stroke="#c4c4c4" stroke-width="0.4" />
<path d="M942.4 560.2V569M938.4 564.4H947" fill="none" stroke="#c4c0b8" stroke-width="0.7" />
<rect x="952.00" y="561.80" width="7.40" height="6.00" fill="#c8c8d0" stroke="#606068" stroke-width="0.5" />
<circle cx="954.00" cy="561.40" r="2.00" fill="#d8d8e0" stroke="#80808c" stroke-width="0.4" />
<path d="M955.2 568.8L957.6 564.8L960 568.8Z" fill="#f4d020" stroke="#a08810" stroke-width="0.3" />
<ellipse cx="968.2" cy="564.6" rx="3.6" ry="4.0" fill="#f2f2f0" stroke="#b8b8b4" stroke-width="0.4"/>
<path d="M968.0 560.8V568.4" fill="none" stroke="#9a9a96" stroke-width="0.6" />
<text x="987.00" y="562.75" font-size="6.4" fill="#000" textLength="14.80" lengthAdjust="spacingAndGlyphs" >09:57</text>
<text x="980.00" y="571.25" font-size="6.4" fill="#000" textLength="29.30" lengthAdjust="spacingAndGlyphs" >10-03-2017</text>
<rect x="1013.80" y="562.20" width="7.20" height="5.40" fill="#3c78d8" stroke="#1c48a0" stroke-width="0.4" />
<rect x="1013.80" y="566.20" width="7.20" height="1.40" fill="#1c3c90" />
</svg>
</body>
</html>
